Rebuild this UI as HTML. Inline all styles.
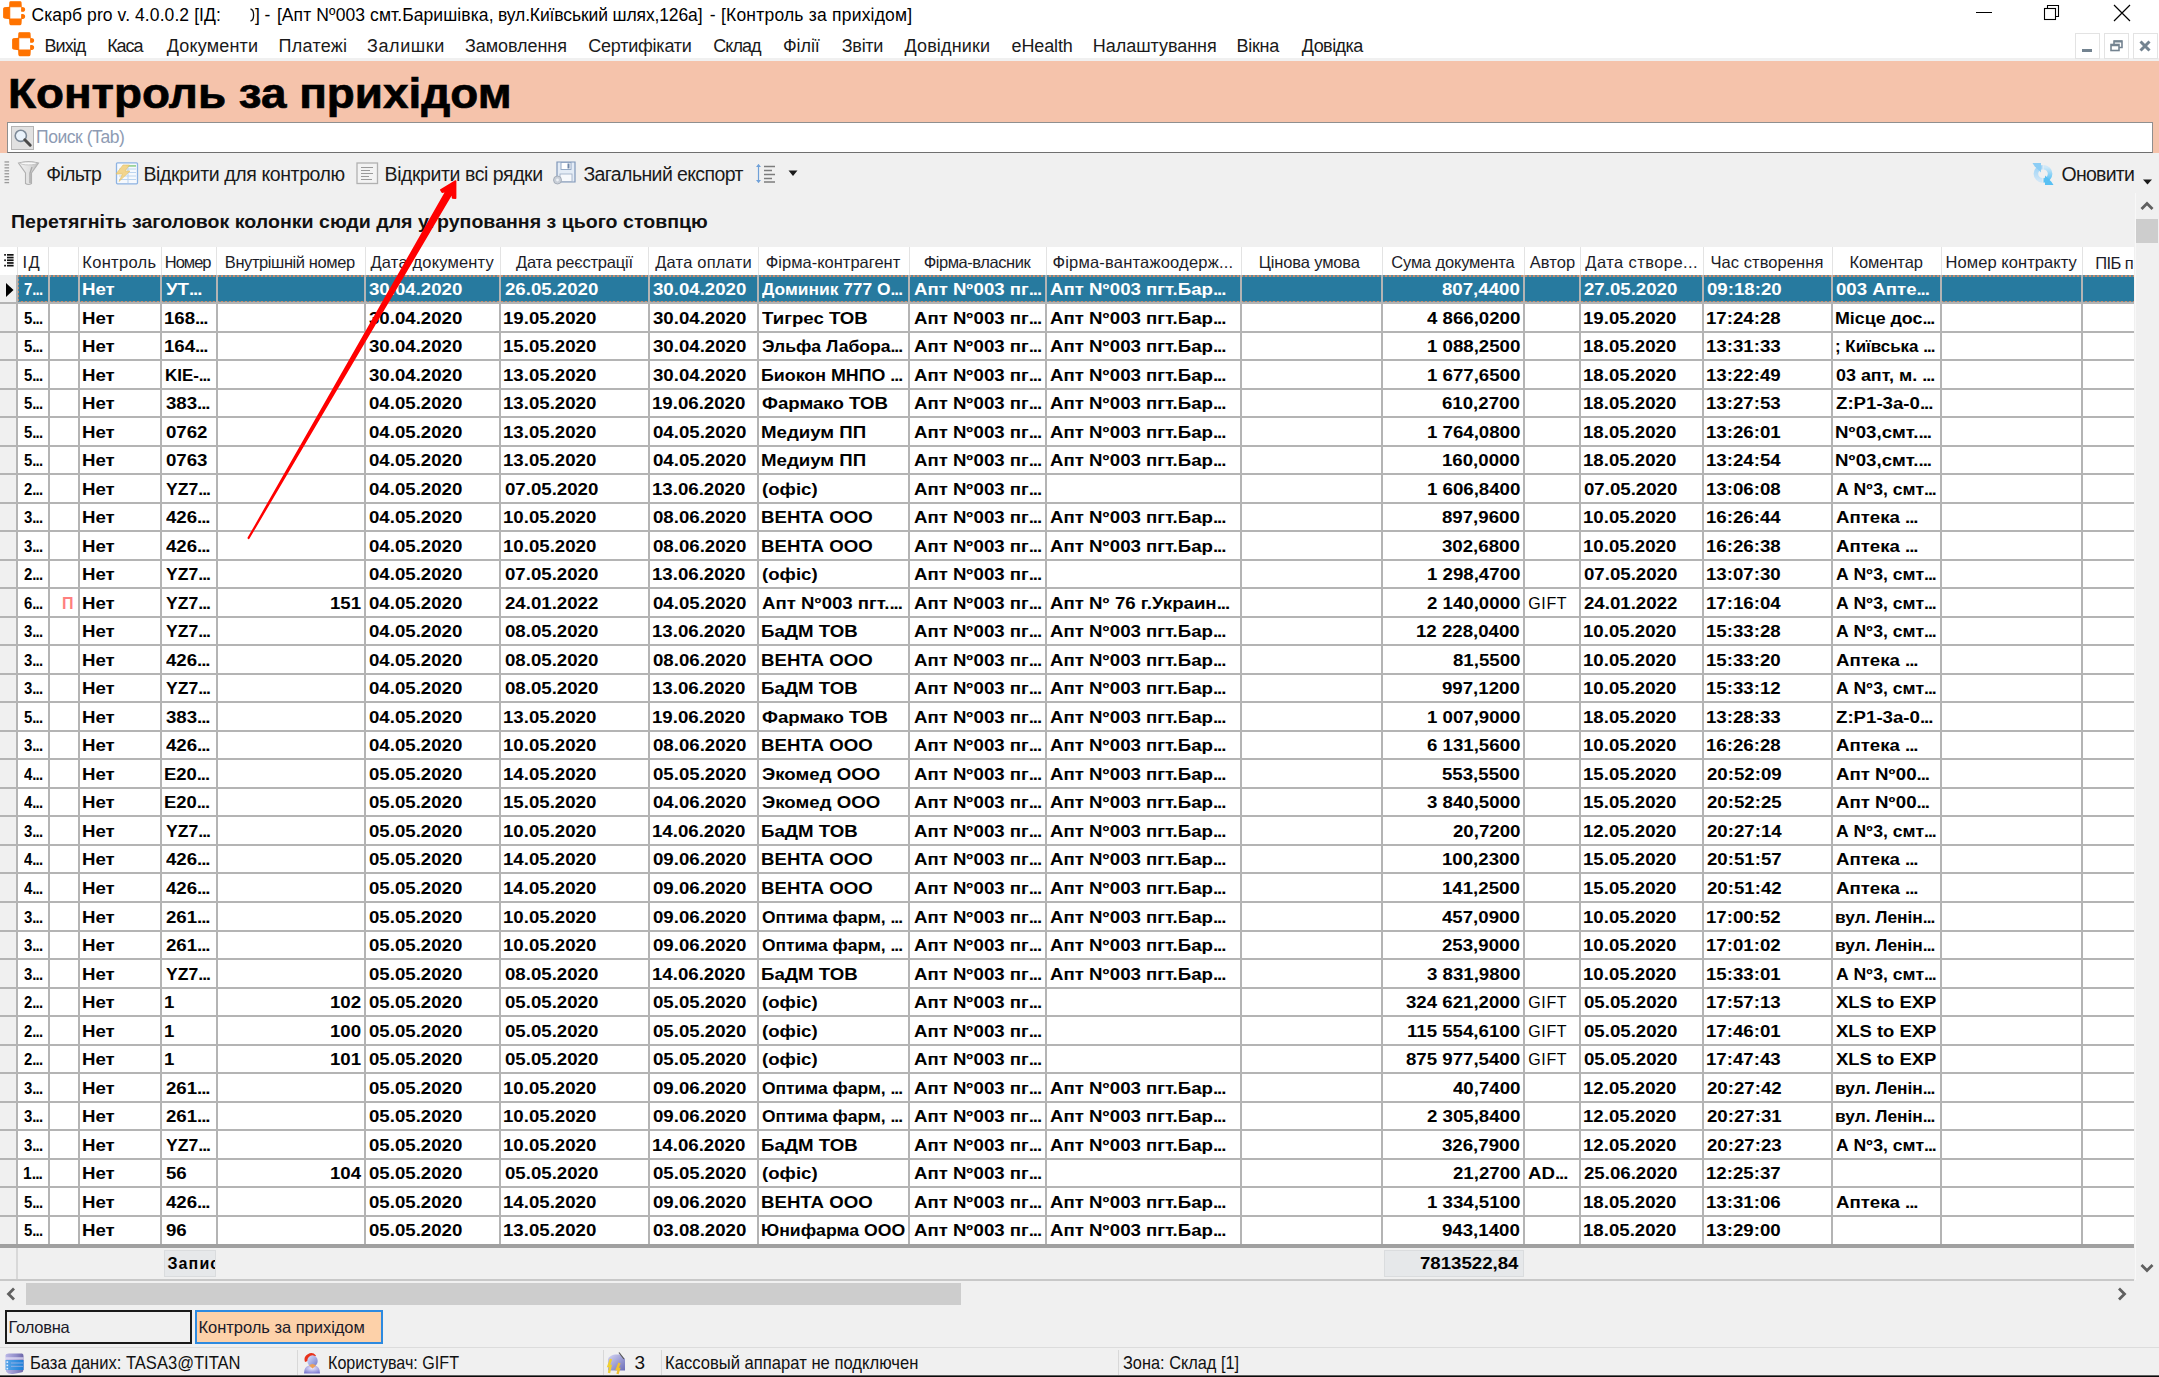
<!DOCTYPE html>
<html><head><meta charset="utf-8"><style>
html,body{margin:0;padding:0;}
body{width:2159px;height:1377px;overflow:hidden;position:relative;background:#f0f0f0;font-family:"Liberation Sans",sans-serif;}
body>div,body>span,body>svg,div>span{position:absolute;}
span{white-space:pre;line-height:1;}
</style></head><body>
<div style="left:0px;top:0px;width:2159px;height:58px;background:#fff;"></div>
<div style="left:0px;top:58px;width:2159px;height:3px;background:#f0f0f0;"></div>
<svg style="left:3px;top:1px" width="23.0" height="25.0" viewBox="0 0 23 25"><g fill="#ff7300" stroke="#ff7300" stroke-width="1.1" stroke-linejoin="round">
<path d="M7.4 0.7 H17.3 Q17.9 0.7 18 1.5 L18.2 5.8 H6.7 L6.9 1.5 Q7 0.7 7.4 0.7Z"/>
<path d="M1.5 6.8 L6.7 6.2 V17.6 L1.5 17 Q0.7 16.9 0.7 16 V7.8 Q0.7 6.9 1.5 6.8Z"/>
<path d="M6.7 18 H18.2 L18 22.5 Q17.9 23.6 17.2 23.6 H7.6 Q7 23.6 6.9 22.5Z"/>
<path d="M18.7 6.6 Q21.5 6.6 21.6 8.4 Q21.7 10.3 19.5 10.3 L18.7 10.3Z"/>
<path d="M18.7 13.6 L19.5 13.6 Q21.7 13.6 21.6 15.6 Q21.5 17.4 18.7 17.4Z"/>
</g></svg>
<svg style="left:12px;top:32px" width="23.0" height="25.0" viewBox="0 0 23 25"><g fill="#ff7300" stroke="#ff7300" stroke-width="1.1" stroke-linejoin="round">
<path d="M7.4 0.7 H17.3 Q17.9 0.7 18 1.5 L18.2 5.8 H6.7 L6.9 1.5 Q7 0.7 7.4 0.7Z"/>
<path d="M1.5 6.8 L6.7 6.2 V17.6 L1.5 17 Q0.7 16.9 0.7 16 V7.8 Q0.7 6.9 1.5 6.8Z"/>
<path d="M6.7 18 H18.2 L18 22.5 Q17.9 23.6 17.2 23.6 H7.6 Q7 23.6 6.9 22.5Z"/>
<path d="M18.7 6.6 Q21.5 6.6 21.6 8.4 Q21.7 10.3 19.5 10.3 L18.7 10.3Z"/>
<path d="M18.7 13.6 L19.5 13.6 Q21.7 13.6 21.6 15.6 Q21.5 17.4 18.7 17.4Z"/>
</g></svg>
<span style="left:31.50px;top:7.19px;font-size:17.5px;font-weight:normal;color:#000;letter-spacing:0.091px;">Скарб pro v. 4.0.0.2 [ІД:</span>
<svg style="left:250px;top:8px" width="5" height="14" viewBox="0 0 5 14"><path d="M0.5 1 Q3.6 1.5 3.6 7 Q3.6 12.5 0.5 13" fill="none" stroke="#111" stroke-width="1.3"/></svg>
<span style="left:255.00px;top:7.19px;font-size:17.5px;font-weight:normal;color:#000;letter-spacing:-0.112px;">] -</span>
<span style="left:276.90px;top:7.19px;font-size:17.5px;font-weight:normal;color:#000;letter-spacing:0.084px;">[Апт N<i style="font-style:normal;letter-spacing:0.4px">º</i>003 смт.Баришівка,</span>
<span style="left:498.00px;top:7.19px;font-size:17.5px;font-weight:normal;color:#000;letter-spacing:-0.121px;">вул.Київський шлях,126а]</span>
<span style="left:709.80px;top:7.19px;font-size:17.5px;font-weight:normal;color:#000;letter-spacing:0.211px;">- [Контроль за прихідом]</span>
<div style="left:1976px;top:12px;width:16px;height:1px;background:#000;"></div>
<svg style="left:2043px;top:4px" width="18" height="18" viewBox="0 0 18 18"><g fill="none" stroke="#000" stroke-width="1.1"><rect x="1.5" y="4.5" width="11" height="11"/><path d="M4.5 4.5 V1.5 H15.5 V12.5 H12.5"/></g></svg>
<svg style="left:2112px;top:3px" width="20" height="20" viewBox="0 0 20 20"><g stroke="#000" stroke-width="1.2"><path d="M2 2 L18 18 M18 2 L2 18"/></g></svg>
<span style="left:44.60px;top:37.06px;font-size:18px;font-weight:normal;color:#1a1a1a;letter-spacing:-0.990px;">Вихід</span>
<span style="left:107.20px;top:37.06px;font-size:18px;font-weight:normal;color:#1a1a1a;letter-spacing:-1.099px;">Каса</span>
<span style="left:166.70px;top:37.06px;font-size:18px;font-weight:normal;color:#1a1a1a;letter-spacing:0.181px;">Документи</span>
<span style="left:278.60px;top:37.06px;font-size:18px;font-weight:normal;color:#1a1a1a;letter-spacing:0.242px;">Платежі</span>
<span style="left:367.00px;top:37.06px;font-size:18px;font-weight:normal;color:#1a1a1a;letter-spacing:0.591px;">Залишки</span>
<span style="left:465.00px;top:37.06px;font-size:18px;font-weight:normal;color:#1a1a1a;letter-spacing:-0.068px;">Замовлення</span>
<span style="left:588.20px;top:37.06px;font-size:18px;font-weight:normal;color:#1a1a1a;letter-spacing:-0.226px;">Сертифікати</span>
<span style="left:713.30px;top:37.06px;font-size:18px;font-weight:normal;color:#1a1a1a;letter-spacing:-0.972px;">Склад</span>
<span style="left:783.00px;top:37.06px;font-size:18px;font-weight:normal;color:#1a1a1a;letter-spacing:-0.096px;">Філії</span>
<span style="left:841.80px;top:37.06px;font-size:18px;font-weight:normal;color:#1a1a1a;letter-spacing:-0.294px;">Звіти</span>
<span style="left:904.40px;top:37.06px;font-size:18px;font-weight:normal;color:#1a1a1a;letter-spacing:0.170px;">Довідники</span>
<span style="left:1011.60px;top:37.06px;font-size:18px;font-weight:normal;color:#1a1a1a;letter-spacing:-0.139px;">eHealth</span>
<span style="left:1092.80px;top:37.06px;font-size:18px;font-weight:normal;color:#1a1a1a;letter-spacing:-0.042px;">Налаштування</span>
<span style="left:1236.40px;top:37.06px;font-size:18px;font-weight:normal;color:#1a1a1a;letter-spacing:-0.255px;">Вікна</span>
<span style="left:1301.80px;top:37.06px;font-size:18px;font-weight:normal;color:#1a1a1a;letter-spacing:-0.540px;">Довідка</span>
<div style="left:2075px;top:33px;width:25px;height:26px;background:#fff;box-sizing:border-box;border:1px solid #e3e3e3;"></div>
<div style="left:2104px;top:33px;width:25px;height:26px;background:#fff;box-sizing:border-box;border:1px solid #e3e3e3;"></div>
<div style="left:2133px;top:33px;width:25px;height:26px;background:#fff;box-sizing:border-box;border:1px solid #e3e3e3;"></div>
<div style="left:2082px;top:49px;width:10px;height:3px;background:#738390;"></div>
<svg style="left:2109px;top:38px" width="16" height="16" viewBox="0 0 16 16"><g fill="none" stroke="#738390" stroke-width="1.6"><rect x="2" y="6.5" width="8" height="6"/><path d="M5 6.5 V3 H13 V9.5 H10"/></g><path d="M2 6 H10 V8.2 H2Z M5 2.5 H13 V4.6 H5Z" fill="#738390"/></svg>
<svg style="left:2138px;top:39px" width="14" height="14" viewBox="0 0 14 14"><g stroke="#738390" stroke-width="3"><path d="M2.5 2.5 L11.5 11.5 M11.5 2.5 L2.5 11.5"/></g></svg>
<div style="left:0px;top:61px;width:2159px;height:92px;background:#f5c3ab;"></div>
<span style="left:7.67px;top:72.30px;font-size:43px;font-weight:bold;color:#000;transform:scaleX(1.0652);transform-origin:0 0;-webkit-text-stroke:0.7px #000;">Контроль за прихідом</span>
<div style="left:7px;top:122px;width:2146px;height:31px;background:#fff;box-sizing:border-box;border:1px solid #8f8f8f;border-bottom-color:#6f6f6f;"></div>
<div style="left:11px;top:126px;width:23px;height:24px;background:#e1e1e1;box-sizing:border-box;border:1px solid #b4b4b4;"></div>
<svg style="left:13px;top:128px" width="20" height="20" viewBox="0 0 20 20"><circle cx="7.8" cy="7.8" r="5.6" fill="#eaf3fb" stroke="#7d8a98" stroke-width="1.6"/><path d="M11.8 11.8 L17.2 17.2" stroke="#4a4a4a" stroke-width="3" stroke-linecap="round"/></svg>
<span style="left:36.00px;top:128.89px;font-size:17.5px;font-weight:normal;color:#8e9bb3;letter-spacing:-0.440px;">Поиск (Tab)</span>
<svg style="left:4px;top:161px" width="6" height="24" viewBox="0 0 6 24"><g fill="#9a9a9a"><rect x="0.5" y="0.30" width="4.6" height="1.3"/><rect x="0.5" y="3.25" width="4.6" height="1.3"/><rect x="0.5" y="6.20" width="4.6" height="1.3"/><rect x="0.5" y="9.15" width="4.6" height="1.3"/><rect x="0.5" y="12.10" width="4.6" height="1.3"/><rect x="0.5" y="15.05" width="4.6" height="1.3"/><rect x="0.5" y="18.00" width="4.6" height="1.3"/><rect x="0.5" y="20.95" width="4.6" height="1.3"/></g></svg>
<svg style="left:17px;top:160px" width="23" height="26" viewBox="0 0 23 26"><defs><linearGradient id="fg" x1="0" x2="1"><stop offset="0" stop-color="#f2f2f2"/><stop offset="0.55" stop-color="#e0e0e0"/><stop offset="1" stop-color="#b9b9b9"/></linearGradient></defs><path d="M1.5 3 Q11.5 0 21.5 3 L14.5 13 V23.5 Q11.5 25.5 8.5 23.5 V13 Z" fill="url(#fg)" stroke="#b0b0b0" stroke-width="1.1"/><ellipse cx="11.5" cy="3.4" rx="8" ry="1.5" fill="#f8f8f8" stroke="#bcbcbc" stroke-width="0.8"/><path d="M15 7 L13 13 V23" stroke="#a9a9a9" stroke-width="1.4" fill="none"/></svg>
<span style="left:46.20px;top:164.69px;font-size:19.5px;font-weight:normal;color:#1a1a1a;letter-spacing:-0.661px;">Фільтр</span>
<svg style="left:114px;top:162px" width="25" height="23" viewBox="0 0 25 23"><rect x="2.5" y="0.8" width="21" height="21" rx="1" fill="#f6f9fd" stroke="#8db3e2" stroke-width="1.3"/><g stroke="#bcd5f0" stroke-width="1.1"><path d="M5 7 H22 M5 10.5 H22 M5 14 H22 M5 17.5 H22 M14 4 V21"/></g><rect x="12" y="3" width="10" height="1.8" fill="#9ad39a"/><path d="M9 3 L2 12 H8.5 L5 19.5 L16 9 H11 L15.5 3 Z" fill="#f3d488" stroke="#e2bd5e" stroke-width="0.6" opacity="0.95"/></svg>
<span style="left:143.50px;top:164.69px;font-size:19.5px;font-weight:normal;color:#1a1a1a;letter-spacing:-0.390px;">Відкрити для контролю</span>
<svg style="left:356px;top:162px" width="23" height="23" viewBox="0 0 23 23"><rect x="1" y="1" width="20.5" height="20.5" fill="#f3f3f3" stroke="#b1b1b1" stroke-width="1.3"/><g stroke="#9a9a9a" stroke-width="1.2"><path d="M5 5.5 H17 M5 8.5 H14 M5 11.5 H17 M5 14.5 H13 M5 17.5 H16"/></g></svg>
<span style="left:384.60px;top:164.69px;font-size:19.5px;font-weight:normal;color:#1a1a1a;letter-spacing:-0.433px;">Відкрити всі рядки</span>
<svg style="left:552px;top:161px" width="25" height="24" viewBox="0 0 25 24"><path d="M5 1 H23 V21 H7 L5 19 Z" fill="#e4ecf6" stroke="#7f96b8" stroke-width="1.2"/><rect x="9" y="1.5" width="10" height="7" fill="#fff" stroke="#8aa0bf" stroke-width="0.9"/><rect x="15.5" y="2.5" width="2" height="5" fill="#6f86a8"/><rect x="8" y="13" width="12" height="7.5" fill="#f7f9fc" stroke="#9aaac2" stroke-width="0.8"/><circle cx="5.5" cy="19" r="4" fill="#c9cfd8" stroke="#9aa3b0" stroke-width="0.8"/><circle cx="5.5" cy="19" r="1.4" fill="#eef1f5"/></svg>
<span style="left:583.40px;top:164.69px;font-size:19.5px;font-weight:normal;color:#1a1a1a;letter-spacing:-0.608px;">Загальний експорт</span>
<svg style="left:755px;top:163px" width="22" height="21" viewBox="0 0 22 21"><path d="M3.5 1.5 V19.5" stroke="#6fa0d8" stroke-width="1.2"/><path d="M1 4 L3.5 1 L6 4 Z M1 17 L3.5 20 L6 17 Z" fill="#6fa0d8"/><g stroke="#7c7c7c" stroke-width="1.3"><path d="M9 3.5 H20 M9 7.5 H17 M9 11.5 H20 M9 15.5 H17 M9 19 H20"/></g></svg>
<svg style="left:788px;top:170px" width="10" height="7" viewBox="0 0 10 7"><path d="M0.5 0.5 H9.5 L5 6 Z" fill="#1a1a1a"/></svg>
<svg style="left:2031px;top:162px" width="24" height="24" viewBox="0 0 24 24"><defs><linearGradient id="rg1" x1="0" y1="0" x2="0" y2="1"><stop offset="0" stop-color="#9fd4f7"/><stop offset="1" stop-color="#cfe6f7"/></linearGradient><linearGradient id="rg2" x1="0" y1="0" x2="0" y2="1"><stop offset="0" stop-color="#cfe8f8"/><stop offset="1" stop-color="#55c0f4"/></linearGradient></defs><path d="M11.5 5.2 A6.6 6.6 0 0 0 11.5 18.4" fill="none" stroke="url(#rg1)" stroke-width="4.6"/><path d="M1.5 1 H10 V10.5 L7.2 7.8 L3.6 4.2 Z" fill="#8ccdf5"/><path d="M12.5 5.2 A6.6 6.6 0 0 1 12.5 18.4" fill="none" stroke="url(#rg2)" stroke-width="4.6"/><path d="M22.5 23 H14 V13.5 L16.8 16.2 L20.4 19.8 Z" fill="#58c0f3"/></svg>
<span style="left:2061.50px;top:164.69px;font-size:19.5px;font-weight:normal;color:#1a1a1a;letter-spacing:-0.744px;">Оновити</span>
<svg style="left:2142px;top:178px" width="11" height="8" viewBox="0 0 11 8"><path d="M1 1.5 H10 L5.5 6.5 Z" fill="#1a1a1a"/></svg>
<span style="left:11.41px;top:212.66px;font-size:18px;font-weight:bold;color:#111;transform:scaleX(1.0873);transform-origin:0 0;">Перетягніть заголовок колонки сюди для угруповання з цього стовпцю</span>
<div style="left:0px;top:247px;width:2134px;height:28px;background:#fff;"></div>
<div style="left:17px;top:247px;width:1px;height:28px;background:#e3e3e3;"></div>
<div style="left:48px;top:247px;width:1px;height:28px;background:#e3e3e3;"></div>
<div style="left:78px;top:247px;width:1px;height:28px;background:#e3e3e3;"></div>
<div style="left:161px;top:247px;width:1px;height:28px;background:#e3e3e3;"></div>
<div style="left:216px;top:247px;width:1px;height:28px;background:#e3e3e3;"></div>
<div style="left:365px;top:247px;width:1px;height:28px;background:#e3e3e3;"></div>
<div style="left:500px;top:247px;width:1px;height:28px;background:#e3e3e3;"></div>
<div style="left:648px;top:247px;width:1px;height:28px;background:#e3e3e3;"></div>
<div style="left:758px;top:247px;width:1px;height:28px;background:#e3e3e3;"></div>
<div style="left:909px;top:247px;width:1px;height:28px;background:#e3e3e3;"></div>
<div style="left:1046px;top:247px;width:1px;height:28px;background:#e3e3e3;"></div>
<div style="left:1241px;top:247px;width:1px;height:28px;background:#e3e3e3;"></div>
<div style="left:1382px;top:247px;width:1px;height:28px;background:#e3e3e3;"></div>
<div style="left:1524px;top:247px;width:1px;height:28px;background:#e3e3e3;"></div>
<div style="left:1580px;top:247px;width:1px;height:28px;background:#e3e3e3;"></div>
<div style="left:1703px;top:247px;width:1px;height:28px;background:#e3e3e3;"></div>
<div style="left:1832px;top:247px;width:1px;height:28px;background:#e3e3e3;"></div>
<div style="left:1941px;top:247px;width:1px;height:28px;background:#e3e3e3;"></div>
<div style="left:2082px;top:247px;width:1px;height:28px;background:#e3e3e3;"></div>
<svg style="left:4px;top:253px" width="10" height="15" viewBox="0 0 10 15"><g fill="#111"><rect x="3" y="1.0" width="6.6" height="1.7"/><rect x="3" y="3.7" width="6.6" height="1.7"/><rect x="3" y="6.4" width="6.6" height="1.7"/><rect x="3" y="9.1" width="6.6" height="1.7"/><rect x="3" y="11.8" width="6.6" height="1.7"/><rect x="0.2" y="1" width="1.7" height="1.7"/><rect x="0.2" y="6.4" width="1.7" height="1.7"/><rect x="0.2" y="11.8" width="1.7" height="1.7"/></g></svg>
<span style="left:22.50px;top:253.93px;font-size:16.5px;font-weight:normal;color:#1c1c28;letter-spacing:1.416px;">ІД</span>
<span style="left:82.30px;top:253.93px;font-size:16.5px;font-weight:normal;color:#1c1c28;letter-spacing:0.304px;">Контроль</span>
<span style="left:164.80px;top:253.93px;font-size:16.5px;font-weight:normal;color:#1c1c28;letter-spacing:-1.028px;">Номер</span>
<span style="left:224.80px;top:253.93px;font-size:16.5px;font-weight:normal;color:#1c1c28;letter-spacing:-0.413px;">Внутрішній номер</span>
<span style="left:370.50px;top:253.93px;font-size:16.5px;font-weight:normal;color:#1c1c28;letter-spacing:0.172px;">Дата документу</span>
<span style="left:515.90px;top:253.93px;font-size:16.5px;font-weight:normal;color:#1c1c28;letter-spacing:-0.176px;">Дата реєстрації</span>
<span style="left:655.20px;top:253.93px;font-size:16.5px;font-weight:normal;color:#1c1c28;letter-spacing:0.197px;">Дата оплати</span>
<span style="left:765.80px;top:253.93px;font-size:16.5px;font-weight:normal;color:#1c1c28;letter-spacing:-0.003px;">Фірма-контрагент</span>
<span style="left:923.70px;top:253.93px;font-size:16.5px;font-weight:normal;color:#1c1c28;letter-spacing:-0.456px;">Фірма-власник</span>
<span style="left:1052.40px;top:253.93px;font-size:16.5px;font-weight:normal;color:#1c1c28;letter-spacing:0.203px;">Фірма-вантажоодерж...</span>
<span style="left:1258.80px;top:253.93px;font-size:16.5px;font-weight:normal;color:#1c1c28;letter-spacing:-0.152px;">Цінова умова</span>
<span style="left:1391.30px;top:253.93px;font-size:16.5px;font-weight:normal;color:#1c1c28;letter-spacing:-0.174px;">Сума документа</span>
<span style="left:1529.70px;top:253.93px;font-size:16.5px;font-weight:normal;color:#1c1c28;letter-spacing:0.086px;">Автор</span>
<span style="left:1585.30px;top:253.93px;font-size:16.5px;font-weight:normal;color:#1c1c28;letter-spacing:0.430px;">Дата створе...</span>
<span style="left:1710.40px;top:253.93px;font-size:16.5px;font-weight:normal;color:#1c1c28;letter-spacing:0.071px;">Час створення</span>
<span style="left:1849.50px;top:253.93px;font-size:16.5px;font-weight:normal;color:#1c1c28;letter-spacing:-0.110px;">Коментар</span>
<span style="left:1945.50px;top:253.93px;font-size:16.5px;font-weight:normal;color:#1c1c28;letter-spacing:0.070px;">Номер контракту</span>
<div style="left:2083px;top:247px;width:51px;height:28px;overflow:hidden">
<span style="left:12.2px;top:7.63px;font-size:16.5px;color:#1c1c28;letter-spacing:-0.6px">ПІБ п</span>
</div>
<div style="left:0px;top:275px;width:2134px;height:969px;background:#fff;"></div>
<div style="left:0px;top:275px;width:16px;height:969px;background:#f0f0f0;"></div>
<div style="left:17px;top:275px;width:2117px;height:28px;background:#277a9f;"></div>
<div style="left:17px;top:275px;width:2117px;height:2px;background:repeating-linear-gradient(90deg,#c98d6c 0 2px,#5a8aa0 2px 4px);"></div>
<div style="left:17px;top:301px;width:2117px;height:2px;background:repeating-linear-gradient(90deg,#c98d6c 0 2px,#5a8aa0 2px 4px);"></div>
<div style="left:17px;top:275px;width:2px;height:28px;background:repeating-linear-gradient(180deg,#c98d6c 0 2px,#5a8aa0 2px 4px);"></div>
<svg style="left:6px;top:283px" width="8" height="14" viewBox="0 0 8 14"><path d="M0 0 L7.5 7 L0 14Z" fill="#000"/></svg>
<div style="left:0px;top:302px;width:2134px;height:2px;background:#b4b4b4;"></div>
<div style="left:0px;top:331px;width:2134px;height:2px;background:#b4b4b4;"></div>
<div style="left:0px;top:359px;width:2134px;height:2px;background:#b4b4b4;"></div>
<div style="left:0px;top:388px;width:2134px;height:2px;background:#b4b4b4;"></div>
<div style="left:0px;top:416px;width:2134px;height:2px;background:#b4b4b4;"></div>
<div style="left:0px;top:445px;width:2134px;height:2px;background:#b4b4b4;"></div>
<div style="left:0px;top:473px;width:2134px;height:2px;background:#b4b4b4;"></div>
<div style="left:0px;top:502px;width:2134px;height:2px;background:#b4b4b4;"></div>
<div style="left:0px;top:530px;width:2134px;height:2px;background:#b4b4b4;"></div>
<div style="left:0px;top:559px;width:2134px;height:2px;background:#b4b4b4;"></div>
<div style="left:0px;top:587px;width:2134px;height:2px;background:#b4b4b4;"></div>
<div style="left:0px;top:616px;width:2134px;height:2px;background:#b4b4b4;"></div>
<div style="left:0px;top:644px;width:2134px;height:2px;background:#b4b4b4;"></div>
<div style="left:0px;top:673px;width:2134px;height:2px;background:#b4b4b4;"></div>
<div style="left:0px;top:701px;width:2134px;height:2px;background:#b4b4b4;"></div>
<div style="left:0px;top:730px;width:2134px;height:2px;background:#b4b4b4;"></div>
<div style="left:0px;top:758px;width:2134px;height:2px;background:#b4b4b4;"></div>
<div style="left:0px;top:787px;width:2134px;height:2px;background:#b4b4b4;"></div>
<div style="left:0px;top:815px;width:2134px;height:2px;background:#b4b4b4;"></div>
<div style="left:0px;top:844px;width:2134px;height:2px;background:#b4b4b4;"></div>
<div style="left:0px;top:872px;width:2134px;height:2px;background:#b4b4b4;"></div>
<div style="left:0px;top:901px;width:2134px;height:2px;background:#b4b4b4;"></div>
<div style="left:0px;top:930px;width:2134px;height:2px;background:#b4b4b4;"></div>
<div style="left:0px;top:958px;width:2134px;height:2px;background:#b4b4b4;"></div>
<div style="left:0px;top:987px;width:2134px;height:2px;background:#b4b4b4;"></div>
<div style="left:0px;top:1015px;width:2134px;height:2px;background:#b4b4b4;"></div>
<div style="left:0px;top:1044px;width:2134px;height:2px;background:#b4b4b4;"></div>
<div style="left:0px;top:1072px;width:2134px;height:2px;background:#b4b4b4;"></div>
<div style="left:0px;top:1101px;width:2134px;height:2px;background:#b4b4b4;"></div>
<div style="left:0px;top:1129px;width:2134px;height:2px;background:#b4b4b4;"></div>
<div style="left:0px;top:1158px;width:2134px;height:2px;background:#b4b4b4;"></div>
<div style="left:0px;top:1186px;width:2134px;height:2px;background:#b4b4b4;"></div>
<div style="left:0px;top:1215px;width:2134px;height:2px;background:#b4b4b4;"></div>
<div style="left:16px;top:275px;width:2px;height:969px;background:#b4b4b4;"></div>
<div style="left:48px;top:275px;width:2px;height:969px;background:#b4b4b4;"></div>
<div style="left:78px;top:275px;width:2px;height:969px;background:#b4b4b4;"></div>
<div style="left:160px;top:275px;width:2px;height:969px;background:#b4b4b4;"></div>
<div style="left:216px;top:275px;width:2px;height:969px;background:#b4b4b4;"></div>
<div style="left:364px;top:275px;width:2px;height:969px;background:#b4b4b4;"></div>
<div style="left:499px;top:275px;width:2px;height:969px;background:#b4b4b4;"></div>
<div style="left:648px;top:275px;width:2px;height:969px;background:#b4b4b4;"></div>
<div style="left:757px;top:275px;width:2px;height:969px;background:#b4b4b4;"></div>
<div style="left:908px;top:275px;width:2px;height:969px;background:#b4b4b4;"></div>
<div style="left:1045px;top:275px;width:2px;height:969px;background:#b4b4b4;"></div>
<div style="left:1240px;top:275px;width:2px;height:969px;background:#b4b4b4;"></div>
<div style="left:1381px;top:275px;width:2px;height:969px;background:#b4b4b4;"></div>
<div style="left:1523px;top:275px;width:2px;height:969px;background:#b4b4b4;"></div>
<div style="left:1579px;top:275px;width:2px;height:969px;background:#b4b4b4;"></div>
<div style="left:1702px;top:275px;width:2px;height:969px;background:#b4b4b4;"></div>
<div style="left:1831px;top:275px;width:2px;height:969px;background:#b4b4b4;"></div>
<div style="left:1940px;top:275px;width:2px;height:969px;background:#b4b4b4;"></div>
<div style="left:2081px;top:275px;width:2px;height:969px;background:#b4b4b4;"></div>
<div style="left:0px;top:1244px;width:2134px;height:4px;background:#a0a0a0;"></div>
<span style="left:23.70px;top:281.86px;font-size:16px;font-weight:bold;color:#fff;transform:scaleX(0.9317);transform-origin:0 0;">7<i style="font-style:normal;letter-spacing:-0.9px">..</i>.</span>
<span style="left:81.63px;top:281.86px;font-size:16px;font-weight:bold;color:#fff;transform:scaleX(1.1650);transform-origin:0 0;">Нет</span>
<span style="left:165.60px;top:281.86px;font-size:16px;font-weight:bold;color:#fff;transform:scaleX(1.1650);transform-origin:0 0;">УТ<i style="font-style:normal;letter-spacing:-0.9px">..</i>.</span>
<span style="left:369.30px;top:281.86px;font-size:16px;font-weight:bold;color:#fff;transform:scaleX(1.1650);transform-origin:0 0;">30.04.2020</span>
<span style="left:504.60px;top:281.86px;font-size:16px;font-weight:bold;color:#fff;transform:scaleX(1.1650);transform-origin:0 0;">26.05.2020</span>
<span style="left:652.80px;top:281.86px;font-size:16px;font-weight:bold;color:#fff;transform:scaleX(1.1650);transform-origin:0 0;">30.04.2020</span>
<span style="left:762.30px;top:281.86px;font-size:16px;font-weight:bold;color:#fff;transform:scaleX(1.0856);transform-origin:0 0;">Доминик 777 О<i style="font-style:normal;letter-spacing:-0.9px">..</i>.</span>
<span style="left:913.60px;top:281.86px;font-size:16px;font-weight:bold;color:#fff;transform:scaleX(1.1617);transform-origin:0 0;">Апт N<i style="font-style:normal;letter-spacing:0.4px">º</i>003 пг<i style="font-style:normal;letter-spacing:-0.9px">..</i>.</span>
<span style="left:1050.30px;top:281.86px;font-size:16px;font-weight:bold;color:#fff;transform:scaleX(1.1650);transform-origin:0 0;">Апт N<i style="font-style:normal;letter-spacing:0.4px">º</i>003 пгт.Бар<i style="font-style:normal;letter-spacing:-0.9px">..</i>.</span>
<span style="left:1442.14px;top:281.86px;font-size:16px;font-weight:bold;color:#fff;transform:scaleX(1.1650);transform-origin:0 0;">807,4400</span>
<span style="left:1584.30px;top:281.86px;font-size:16px;font-weight:bold;color:#fff;transform:scaleX(1.1650);transform-origin:0 0;">27.05.2020</span>
<span style="left:1707.30px;top:281.86px;font-size:16px;font-weight:bold;color:#fff;transform:scaleX(1.1650);transform-origin:0 0;">09:18:20</span>
<span style="left:1836.30px;top:281.86px;font-size:16px;font-weight:bold;color:#fff;transform:scaleX(1.1650);transform-origin:0 0;">003 Апте<i style="font-style:normal;letter-spacing:-0.9px">..</i>.</span>
<span style="left:23.70px;top:310.86px;font-size:16px;font-weight:bold;color:#000;transform:scaleX(0.9317);transform-origin:0 0;">5<i style="font-style:normal;letter-spacing:-0.9px">..</i>.</span>
<span style="left:81.63px;top:310.86px;font-size:16px;font-weight:bold;color:#000;transform:scaleX(1.1650);transform-origin:0 0;">Нет</span>
<span style="left:164.44px;top:310.86px;font-size:16px;font-weight:bold;color:#000;transform:scaleX(1.1650);transform-origin:0 0;">168<i style="font-style:normal;letter-spacing:-0.9px">..</i>.</span>
<span style="left:369.30px;top:310.86px;font-size:16px;font-weight:bold;color:#000;transform:scaleX(1.1650);transform-origin:0 0;">30.04.2020</span>
<span style="left:503.44px;top:310.86px;font-size:16px;font-weight:bold;color:#000;transform:scaleX(1.1650);transform-origin:0 0;">19.05.2020</span>
<span style="left:652.80px;top:310.86px;font-size:16px;font-weight:bold;color:#000;transform:scaleX(1.1650);transform-origin:0 0;">30.04.2020</span>
<span style="left:762.30px;top:310.86px;font-size:16px;font-weight:bold;color:#000;transform:scaleX(1.1650);transform-origin:0 0;">Тигрес ТОВ</span>
<span style="left:913.60px;top:310.86px;font-size:16px;font-weight:bold;color:#000;transform:scaleX(1.1617);transform-origin:0 0;">Апт N<i style="font-style:normal;letter-spacing:0.4px">º</i>003 пг<i style="font-style:normal;letter-spacing:-0.9px">..</i>.</span>
<span style="left:1050.30px;top:310.86px;font-size:16px;font-weight:bold;color:#000;transform:scaleX(1.1650);transform-origin:0 0;">Апт N<i style="font-style:normal;letter-spacing:0.4px">º</i>003 пгт.Бар<i style="font-style:normal;letter-spacing:-0.9px">..</i>.</span>
<span style="left:1426.59px;top:310.86px;font-size:16px;font-weight:bold;color:#000;transform:scaleX(1.1650);transform-origin:0 0;">4 866,0200</span>
<span style="left:1583.13px;top:310.86px;font-size:16px;font-weight:bold;color:#000;transform:scaleX(1.1650);transform-origin:0 0;">19.05.2020</span>
<span style="left:1706.13px;top:310.86px;font-size:16px;font-weight:bold;color:#000;transform:scaleX(1.1650);transform-origin:0 0;">17:24:28</span>
<span style="left:1835.19px;top:310.86px;font-size:16px;font-weight:bold;color:#000;transform:scaleX(1.1144);transform-origin:0 0;">Місце дос<i style="font-style:normal;letter-spacing:-0.9px">..</i>.</span>
<span style="left:23.70px;top:339.36px;font-size:16px;font-weight:bold;color:#000;transform:scaleX(0.9317);transform-origin:0 0;">5<i style="font-style:normal;letter-spacing:-0.9px">..</i>.</span>
<span style="left:81.63px;top:339.36px;font-size:16px;font-weight:bold;color:#000;transform:scaleX(1.1650);transform-origin:0 0;">Нет</span>
<span style="left:164.44px;top:339.36px;font-size:16px;font-weight:bold;color:#000;transform:scaleX(1.1650);transform-origin:0 0;">164<i style="font-style:normal;letter-spacing:-0.9px">..</i>.</span>
<span style="left:369.30px;top:339.36px;font-size:16px;font-weight:bold;color:#000;transform:scaleX(1.1650);transform-origin:0 0;">30.04.2020</span>
<span style="left:503.44px;top:339.36px;font-size:16px;font-weight:bold;color:#000;transform:scaleX(1.1650);transform-origin:0 0;">15.05.2020</span>
<span style="left:652.80px;top:339.36px;font-size:16px;font-weight:bold;color:#000;transform:scaleX(1.1650);transform-origin:0 0;">30.04.2020</span>
<span style="left:762.30px;top:339.36px;font-size:16px;font-weight:bold;color:#000;transform:scaleX(1.0956);transform-origin:0 0;">Эльфа Лабора<i style="font-style:normal;letter-spacing:-0.9px">..</i>.</span>
<span style="left:913.60px;top:339.36px;font-size:16px;font-weight:bold;color:#000;transform:scaleX(1.1617);transform-origin:0 0;">Апт N<i style="font-style:normal;letter-spacing:0.4px">º</i>003 пг<i style="font-style:normal;letter-spacing:-0.9px">..</i>.</span>
<span style="left:1050.30px;top:339.36px;font-size:16px;font-weight:bold;color:#000;transform:scaleX(1.1650);transform-origin:0 0;">Апт N<i style="font-style:normal;letter-spacing:0.4px">º</i>003 пгт.Бар<i style="font-style:normal;letter-spacing:-0.9px">..</i>.</span>
<span style="left:1426.59px;top:339.36px;font-size:16px;font-weight:bold;color:#000;transform:scaleX(1.1650);transform-origin:0 0;">1 088,2500</span>
<span style="left:1583.13px;top:339.36px;font-size:16px;font-weight:bold;color:#000;transform:scaleX(1.1650);transform-origin:0 0;">18.05.2020</span>
<span style="left:1706.13px;top:339.36px;font-size:16px;font-weight:bold;color:#000;transform:scaleX(1.1650);transform-origin:0 0;">13:31:33</span>
<span style="left:1835.24px;top:339.36px;font-size:16px;font-weight:bold;color:#000;transform:scaleX(1.0568);transform-origin:0 0;">; Київська <i style="font-style:normal;letter-spacing:-0.9px">..</i>.</span>
<span style="left:23.70px;top:367.86px;font-size:16px;font-weight:bold;color:#000;transform:scaleX(0.9317);transform-origin:0 0;">5<i style="font-style:normal;letter-spacing:-0.9px">..</i>.</span>
<span style="left:81.63px;top:367.86px;font-size:16px;font-weight:bold;color:#000;transform:scaleX(1.1650);transform-origin:0 0;">Нет</span>
<span style="left:164.54px;top:367.86px;font-size:16px;font-weight:bold;color:#000;transform:scaleX(1.0572);transform-origin:0 0;">KIE-<i style="font-style:normal;letter-spacing:-0.9px">..</i>.</span>
<span style="left:369.30px;top:367.86px;font-size:16px;font-weight:bold;color:#000;transform:scaleX(1.1650);transform-origin:0 0;">30.04.2020</span>
<span style="left:503.44px;top:367.86px;font-size:16px;font-weight:bold;color:#000;transform:scaleX(1.1650);transform-origin:0 0;">13.05.2020</span>
<span style="left:652.80px;top:367.86px;font-size:16px;font-weight:bold;color:#000;transform:scaleX(1.1650);transform-origin:0 0;">30.04.2020</span>
<span style="left:761.19px;top:367.86px;font-size:16px;font-weight:bold;color:#000;transform:scaleX(1.1137);transform-origin:0 0;">Биокон МНПО <i style="font-style:normal;letter-spacing:-0.9px">..</i>.</span>
<span style="left:913.60px;top:367.86px;font-size:16px;font-weight:bold;color:#000;transform:scaleX(1.1617);transform-origin:0 0;">Апт N<i style="font-style:normal;letter-spacing:0.4px">º</i>003 пг<i style="font-style:normal;letter-spacing:-0.9px">..</i>.</span>
<span style="left:1050.30px;top:367.86px;font-size:16px;font-weight:bold;color:#000;transform:scaleX(1.1650);transform-origin:0 0;">Апт N<i style="font-style:normal;letter-spacing:0.4px">º</i>003 пгт.Бар<i style="font-style:normal;letter-spacing:-0.9px">..</i>.</span>
<span style="left:1426.59px;top:367.86px;font-size:16px;font-weight:bold;color:#000;transform:scaleX(1.1650);transform-origin:0 0;">1 677,6500</span>
<span style="left:1583.13px;top:367.86px;font-size:16px;font-weight:bold;color:#000;transform:scaleX(1.1650);transform-origin:0 0;">18.05.2020</span>
<span style="left:1706.13px;top:367.86px;font-size:16px;font-weight:bold;color:#000;transform:scaleX(1.1650);transform-origin:0 0;">13:22:49</span>
<span style="left:1836.30px;top:367.86px;font-size:16px;font-weight:bold;color:#000;transform:scaleX(1.1196);transform-origin:0 0;">03 апт, м. <i style="font-style:normal;letter-spacing:-0.9px">..</i>.</span>
<span style="left:23.70px;top:396.36px;font-size:16px;font-weight:bold;color:#000;transform:scaleX(0.9317);transform-origin:0 0;">5<i style="font-style:normal;letter-spacing:-0.9px">..</i>.</span>
<span style="left:81.63px;top:396.36px;font-size:16px;font-weight:bold;color:#000;transform:scaleX(1.1650);transform-origin:0 0;">Нет</span>
<span style="left:165.60px;top:396.36px;font-size:16px;font-weight:bold;color:#000;transform:scaleX(1.1650);transform-origin:0 0;">383<i style="font-style:normal;letter-spacing:-0.9px">..</i>.</span>
<span style="left:369.30px;top:396.36px;font-size:16px;font-weight:bold;color:#000;transform:scaleX(1.1650);transform-origin:0 0;">04.05.2020</span>
<span style="left:503.44px;top:396.36px;font-size:16px;font-weight:bold;color:#000;transform:scaleX(1.1650);transform-origin:0 0;">13.05.2020</span>
<span style="left:651.63px;top:396.36px;font-size:16px;font-weight:bold;color:#000;transform:scaleX(1.1650);transform-origin:0 0;">19.06.2020</span>
<span style="left:762.30px;top:396.36px;font-size:16px;font-weight:bold;color:#000;transform:scaleX(1.1650);transform-origin:0 0;">Фармако ТОВ</span>
<span style="left:913.60px;top:396.36px;font-size:16px;font-weight:bold;color:#000;transform:scaleX(1.1617);transform-origin:0 0;">Апт N<i style="font-style:normal;letter-spacing:0.4px">º</i>003 пг<i style="font-style:normal;letter-spacing:-0.9px">..</i>.</span>
<span style="left:1050.30px;top:396.36px;font-size:16px;font-weight:bold;color:#000;transform:scaleX(1.1650);transform-origin:0 0;">Апт N<i style="font-style:normal;letter-spacing:0.4px">º</i>003 пгт.Бар<i style="font-style:normal;letter-spacing:-0.9px">..</i>.</span>
<span style="left:1442.14px;top:396.36px;font-size:16px;font-weight:bold;color:#000;transform:scaleX(1.1650);transform-origin:0 0;">610,2700</span>
<span style="left:1583.13px;top:396.36px;font-size:16px;font-weight:bold;color:#000;transform:scaleX(1.1650);transform-origin:0 0;">18.05.2020</span>
<span style="left:1706.13px;top:396.36px;font-size:16px;font-weight:bold;color:#000;transform:scaleX(1.1650);transform-origin:0 0;">13:27:53</span>
<span style="left:1836.30px;top:396.36px;font-size:16px;font-weight:bold;color:#000;transform:scaleX(1.1650);transform-origin:0 0;">Z:P1-3a-0<i style="font-style:normal;letter-spacing:-0.9px">..</i>.</span>
<span style="left:23.70px;top:424.86px;font-size:16px;font-weight:bold;color:#000;transform:scaleX(0.9317);transform-origin:0 0;">5<i style="font-style:normal;letter-spacing:-0.9px">..</i>.</span>
<span style="left:81.63px;top:424.86px;font-size:16px;font-weight:bold;color:#000;transform:scaleX(1.1650);transform-origin:0 0;">Нет</span>
<span style="left:165.60px;top:424.86px;font-size:16px;font-weight:bold;color:#000;transform:scaleX(1.1650);transform-origin:0 0;">0762</span>
<span style="left:369.30px;top:424.86px;font-size:16px;font-weight:bold;color:#000;transform:scaleX(1.1650);transform-origin:0 0;">04.05.2020</span>
<span style="left:503.44px;top:424.86px;font-size:16px;font-weight:bold;color:#000;transform:scaleX(1.1650);transform-origin:0 0;">13.05.2020</span>
<span style="left:652.80px;top:424.86px;font-size:16px;font-weight:bold;color:#000;transform:scaleX(1.1650);transform-origin:0 0;">04.05.2020</span>
<span style="left:761.13px;top:424.86px;font-size:16px;font-weight:bold;color:#000;transform:scaleX(1.1650);transform-origin:0 0;">Медиум ПП</span>
<span style="left:913.60px;top:424.86px;font-size:16px;font-weight:bold;color:#000;transform:scaleX(1.1617);transform-origin:0 0;">Апт N<i style="font-style:normal;letter-spacing:0.4px">º</i>003 пг<i style="font-style:normal;letter-spacing:-0.9px">..</i>.</span>
<span style="left:1050.30px;top:424.86px;font-size:16px;font-weight:bold;color:#000;transform:scaleX(1.1650);transform-origin:0 0;">Апт N<i style="font-style:normal;letter-spacing:0.4px">º</i>003 пгт.Бар<i style="font-style:normal;letter-spacing:-0.9px">..</i>.</span>
<span style="left:1426.59px;top:424.86px;font-size:16px;font-weight:bold;color:#000;transform:scaleX(1.1650);transform-origin:0 0;">1 764,0800</span>
<span style="left:1583.13px;top:424.86px;font-size:16px;font-weight:bold;color:#000;transform:scaleX(1.1650);transform-origin:0 0;">18.05.2020</span>
<span style="left:1706.13px;top:424.86px;font-size:16px;font-weight:bold;color:#000;transform:scaleX(1.1650);transform-origin:0 0;">13:26:01</span>
<span style="left:1835.13px;top:424.86px;font-size:16px;font-weight:bold;color:#000;transform:scaleX(1.1650);transform-origin:0 0;">N<i style="font-style:normal;letter-spacing:0.4px">º</i>03,смт.<i style="font-style:normal;letter-spacing:-0.9px">..</i>.</span>
<span style="left:23.70px;top:453.36px;font-size:16px;font-weight:bold;color:#000;transform:scaleX(0.9317);transform-origin:0 0;">5<i style="font-style:normal;letter-spacing:-0.9px">..</i>.</span>
<span style="left:81.63px;top:453.36px;font-size:16px;font-weight:bold;color:#000;transform:scaleX(1.1650);transform-origin:0 0;">Нет</span>
<span style="left:165.60px;top:453.36px;font-size:16px;font-weight:bold;color:#000;transform:scaleX(1.1650);transform-origin:0 0;">0763</span>
<span style="left:369.30px;top:453.36px;font-size:16px;font-weight:bold;color:#000;transform:scaleX(1.1650);transform-origin:0 0;">04.05.2020</span>
<span style="left:503.44px;top:453.36px;font-size:16px;font-weight:bold;color:#000;transform:scaleX(1.1650);transform-origin:0 0;">13.05.2020</span>
<span style="left:652.80px;top:453.36px;font-size:16px;font-weight:bold;color:#000;transform:scaleX(1.1650);transform-origin:0 0;">04.05.2020</span>
<span style="left:761.13px;top:453.36px;font-size:16px;font-weight:bold;color:#000;transform:scaleX(1.1650);transform-origin:0 0;">Медиум ПП</span>
<span style="left:913.60px;top:453.36px;font-size:16px;font-weight:bold;color:#000;transform:scaleX(1.1617);transform-origin:0 0;">Апт N<i style="font-style:normal;letter-spacing:0.4px">º</i>003 пг<i style="font-style:normal;letter-spacing:-0.9px">..</i>.</span>
<span style="left:1050.30px;top:453.36px;font-size:16px;font-weight:bold;color:#000;transform:scaleX(1.1650);transform-origin:0 0;">Апт N<i style="font-style:normal;letter-spacing:0.4px">º</i>003 пгт.Бар<i style="font-style:normal;letter-spacing:-0.9px">..</i>.</span>
<span style="left:1442.14px;top:453.36px;font-size:16px;font-weight:bold;color:#000;transform:scaleX(1.1650);transform-origin:0 0;">160,0000</span>
<span style="left:1583.13px;top:453.36px;font-size:16px;font-weight:bold;color:#000;transform:scaleX(1.1650);transform-origin:0 0;">18.05.2020</span>
<span style="left:1706.13px;top:453.36px;font-size:16px;font-weight:bold;color:#000;transform:scaleX(1.1650);transform-origin:0 0;">13:24:54</span>
<span style="left:1835.13px;top:453.36px;font-size:16px;font-weight:bold;color:#000;transform:scaleX(1.1650);transform-origin:0 0;">N<i style="font-style:normal;letter-spacing:0.4px">º</i>03,смт.<i style="font-style:normal;letter-spacing:-0.9px">..</i>.</span>
<span style="left:23.70px;top:481.86px;font-size:16px;font-weight:bold;color:#000;transform:scaleX(0.9317);transform-origin:0 0;">2<i style="font-style:normal;letter-spacing:-0.9px">..</i>.</span>
<span style="left:81.63px;top:481.86px;font-size:16px;font-weight:bold;color:#000;transform:scaleX(1.1650);transform-origin:0 0;">Нет</span>
<span style="left:165.60px;top:481.86px;font-size:16px;font-weight:bold;color:#000;transform:scaleX(1.0986);transform-origin:0 0;">YZ7<i style="font-style:normal;letter-spacing:-0.9px">..</i>.</span>
<span style="left:369.30px;top:481.86px;font-size:16px;font-weight:bold;color:#000;transform:scaleX(1.1650);transform-origin:0 0;">04.05.2020</span>
<span style="left:504.60px;top:481.86px;font-size:16px;font-weight:bold;color:#000;transform:scaleX(1.1650);transform-origin:0 0;">07.05.2020</span>
<span style="left:651.63px;top:481.86px;font-size:16px;font-weight:bold;color:#000;transform:scaleX(1.1650);transform-origin:0 0;">13.06.2020</span>
<span style="left:762.30px;top:481.86px;font-size:16px;font-weight:bold;color:#000;transform:scaleX(1.1650);transform-origin:0 0;">(офіс)</span>
<span style="left:913.60px;top:481.86px;font-size:16px;font-weight:bold;color:#000;transform:scaleX(1.1617);transform-origin:0 0;">Апт N<i style="font-style:normal;letter-spacing:0.4px">º</i>003 пг<i style="font-style:normal;letter-spacing:-0.9px">..</i>.</span>
<span style="left:1426.59px;top:481.86px;font-size:16px;font-weight:bold;color:#000;transform:scaleX(1.1650);transform-origin:0 0;">1 606,8400</span>
<span style="left:1584.30px;top:481.86px;font-size:16px;font-weight:bold;color:#000;transform:scaleX(1.1650);transform-origin:0 0;">07.05.2020</span>
<span style="left:1706.13px;top:481.86px;font-size:16px;font-weight:bold;color:#000;transform:scaleX(1.1650);transform-origin:0 0;">13:06:08</span>
<span style="left:1836.30px;top:481.86px;font-size:16px;font-weight:bold;color:#000;transform:scaleX(1.0984);transform-origin:0 0;">А N<i style="font-style:normal;letter-spacing:0.4px">º</i>3, смт<i style="font-style:normal;letter-spacing:-0.9px">..</i>.</span>
<span style="left:23.70px;top:510.36px;font-size:16px;font-weight:bold;color:#000;transform:scaleX(0.9317);transform-origin:0 0;">3<i style="font-style:normal;letter-spacing:-0.9px">..</i>.</span>
<span style="left:81.63px;top:510.36px;font-size:16px;font-weight:bold;color:#000;transform:scaleX(1.1650);transform-origin:0 0;">Нет</span>
<span style="left:165.60px;top:510.36px;font-size:16px;font-weight:bold;color:#000;transform:scaleX(1.1650);transform-origin:0 0;">426<i style="font-style:normal;letter-spacing:-0.9px">..</i>.</span>
<span style="left:369.30px;top:510.36px;font-size:16px;font-weight:bold;color:#000;transform:scaleX(1.1650);transform-origin:0 0;">04.05.2020</span>
<span style="left:503.44px;top:510.36px;font-size:16px;font-weight:bold;color:#000;transform:scaleX(1.1650);transform-origin:0 0;">10.05.2020</span>
<span style="left:652.80px;top:510.36px;font-size:16px;font-weight:bold;color:#000;transform:scaleX(1.1650);transform-origin:0 0;">08.06.2020</span>
<span style="left:761.13px;top:510.36px;font-size:16px;font-weight:bold;color:#000;transform:scaleX(1.1650);transform-origin:0 0;">ВЕНТА ООО</span>
<span style="left:913.60px;top:510.36px;font-size:16px;font-weight:bold;color:#000;transform:scaleX(1.1617);transform-origin:0 0;">Апт N<i style="font-style:normal;letter-spacing:0.4px">º</i>003 пг<i style="font-style:normal;letter-spacing:-0.9px">..</i>.</span>
<span style="left:1050.30px;top:510.36px;font-size:16px;font-weight:bold;color:#000;transform:scaleX(1.1650);transform-origin:0 0;">Апт N<i style="font-style:normal;letter-spacing:0.4px">º</i>003 пгт.Бар<i style="font-style:normal;letter-spacing:-0.9px">..</i>.</span>
<span style="left:1442.14px;top:510.36px;font-size:16px;font-weight:bold;color:#000;transform:scaleX(1.1650);transform-origin:0 0;">897,9600</span>
<span style="left:1583.13px;top:510.36px;font-size:16px;font-weight:bold;color:#000;transform:scaleX(1.1650);transform-origin:0 0;">10.05.2020</span>
<span style="left:1706.13px;top:510.36px;font-size:16px;font-weight:bold;color:#000;transform:scaleX(1.1650);transform-origin:0 0;">16:26:44</span>
<span style="left:1836.30px;top:510.36px;font-size:16px;font-weight:bold;color:#000;transform:scaleX(1.1650);transform-origin:0 0;">Аптека <i style="font-style:normal;letter-spacing:-0.9px">..</i>.</span>
<span style="left:23.70px;top:538.86px;font-size:16px;font-weight:bold;color:#000;transform:scaleX(0.9317);transform-origin:0 0;">3<i style="font-style:normal;letter-spacing:-0.9px">..</i>.</span>
<span style="left:81.63px;top:538.86px;font-size:16px;font-weight:bold;color:#000;transform:scaleX(1.1650);transform-origin:0 0;">Нет</span>
<span style="left:165.60px;top:538.86px;font-size:16px;font-weight:bold;color:#000;transform:scaleX(1.1650);transform-origin:0 0;">426<i style="font-style:normal;letter-spacing:-0.9px">..</i>.</span>
<span style="left:369.30px;top:538.86px;font-size:16px;font-weight:bold;color:#000;transform:scaleX(1.1650);transform-origin:0 0;">04.05.2020</span>
<span style="left:503.44px;top:538.86px;font-size:16px;font-weight:bold;color:#000;transform:scaleX(1.1650);transform-origin:0 0;">10.05.2020</span>
<span style="left:652.80px;top:538.86px;font-size:16px;font-weight:bold;color:#000;transform:scaleX(1.1650);transform-origin:0 0;">08.06.2020</span>
<span style="left:761.13px;top:538.86px;font-size:16px;font-weight:bold;color:#000;transform:scaleX(1.1650);transform-origin:0 0;">ВЕНТА ООО</span>
<span style="left:913.60px;top:538.86px;font-size:16px;font-weight:bold;color:#000;transform:scaleX(1.1617);transform-origin:0 0;">Апт N<i style="font-style:normal;letter-spacing:0.4px">º</i>003 пг<i style="font-style:normal;letter-spacing:-0.9px">..</i>.</span>
<span style="left:1050.30px;top:538.86px;font-size:16px;font-weight:bold;color:#000;transform:scaleX(1.1650);transform-origin:0 0;">Апт N<i style="font-style:normal;letter-spacing:0.4px">º</i>003 пгт.Бар<i style="font-style:normal;letter-spacing:-0.9px">..</i>.</span>
<span style="left:1442.14px;top:538.86px;font-size:16px;font-weight:bold;color:#000;transform:scaleX(1.1650);transform-origin:0 0;">302,6800</span>
<span style="left:1583.13px;top:538.86px;font-size:16px;font-weight:bold;color:#000;transform:scaleX(1.1650);transform-origin:0 0;">10.05.2020</span>
<span style="left:1706.13px;top:538.86px;font-size:16px;font-weight:bold;color:#000;transform:scaleX(1.1650);transform-origin:0 0;">16:26:38</span>
<span style="left:1836.30px;top:538.86px;font-size:16px;font-weight:bold;color:#000;transform:scaleX(1.1650);transform-origin:0 0;">Аптека <i style="font-style:normal;letter-spacing:-0.9px">..</i>.</span>
<span style="left:23.70px;top:567.36px;font-size:16px;font-weight:bold;color:#000;transform:scaleX(0.9317);transform-origin:0 0;">2<i style="font-style:normal;letter-spacing:-0.9px">..</i>.</span>
<span style="left:81.63px;top:567.36px;font-size:16px;font-weight:bold;color:#000;transform:scaleX(1.1650);transform-origin:0 0;">Нет</span>
<span style="left:165.60px;top:567.36px;font-size:16px;font-weight:bold;color:#000;transform:scaleX(1.0986);transform-origin:0 0;">YZ7<i style="font-style:normal;letter-spacing:-0.9px">..</i>.</span>
<span style="left:369.30px;top:567.36px;font-size:16px;font-weight:bold;color:#000;transform:scaleX(1.1650);transform-origin:0 0;">04.05.2020</span>
<span style="left:504.60px;top:567.36px;font-size:16px;font-weight:bold;color:#000;transform:scaleX(1.1650);transform-origin:0 0;">07.05.2020</span>
<span style="left:651.63px;top:567.36px;font-size:16px;font-weight:bold;color:#000;transform:scaleX(1.1650);transform-origin:0 0;">13.06.2020</span>
<span style="left:762.30px;top:567.36px;font-size:16px;font-weight:bold;color:#000;transform:scaleX(1.1650);transform-origin:0 0;">(офіс)</span>
<span style="left:913.60px;top:567.36px;font-size:16px;font-weight:bold;color:#000;transform:scaleX(1.1617);transform-origin:0 0;">Апт N<i style="font-style:normal;letter-spacing:0.4px">º</i>003 пг<i style="font-style:normal;letter-spacing:-0.9px">..</i>.</span>
<span style="left:1426.59px;top:567.36px;font-size:16px;font-weight:bold;color:#000;transform:scaleX(1.1650);transform-origin:0 0;">1 298,4700</span>
<span style="left:1584.30px;top:567.36px;font-size:16px;font-weight:bold;color:#000;transform:scaleX(1.1650);transform-origin:0 0;">07.05.2020</span>
<span style="left:1706.13px;top:567.36px;font-size:16px;font-weight:bold;color:#000;transform:scaleX(1.1650);transform-origin:0 0;">13:07:30</span>
<span style="left:1836.30px;top:567.36px;font-size:16px;font-weight:bold;color:#000;transform:scaleX(1.0984);transform-origin:0 0;">А N<i style="font-style:normal;letter-spacing:0.4px">º</i>3, смт<i style="font-style:normal;letter-spacing:-0.9px">..</i>.</span>
<span style="left:23.70px;top:595.86px;font-size:16px;font-weight:bold;color:#000;transform:scaleX(0.9317);transform-origin:0 0;">6<i style="font-style:normal;letter-spacing:-0.9px">..</i>.</span>
<span style="left:62.00px;top:595.86px;font-size:16px;font-weight:bold;color:#ff7f7f;">П</span>
<span style="left:81.63px;top:595.86px;font-size:16px;font-weight:bold;color:#000;transform:scaleX(1.1650);transform-origin:0 0;">Нет</span>
<span style="left:165.60px;top:595.86px;font-size:16px;font-weight:bold;color:#000;transform:scaleX(1.0986);transform-origin:0 0;">YZ7<i style="font-style:normal;letter-spacing:-0.9px">..</i>.</span>
<span style="left:329.78px;top:595.86px;font-size:16px;font-weight:bold;color:#000;transform:scaleX(1.1650);transform-origin:0 0;">151</span>
<span style="left:369.30px;top:595.86px;font-size:16px;font-weight:bold;color:#000;transform:scaleX(1.1650);transform-origin:0 0;">04.05.2020</span>
<span style="left:504.60px;top:595.86px;font-size:16px;font-weight:bold;color:#000;transform:scaleX(1.1650);transform-origin:0 0;">24.01.2022</span>
<span style="left:652.80px;top:595.86px;font-size:16px;font-weight:bold;color:#000;transform:scaleX(1.1650);transform-origin:0 0;">04.05.2020</span>
<span style="left:762.30px;top:595.86px;font-size:16px;font-weight:bold;color:#000;transform:scaleX(1.1626);transform-origin:0 0;">Апт N<i style="font-style:normal;letter-spacing:0.4px">º</i>003 пгт.<i style="font-style:normal;letter-spacing:-0.9px">..</i>.</span>
<span style="left:913.60px;top:595.86px;font-size:16px;font-weight:bold;color:#000;transform:scaleX(1.1617);transform-origin:0 0;">Апт N<i style="font-style:normal;letter-spacing:0.4px">º</i>003 пг<i style="font-style:normal;letter-spacing:-0.9px">..</i>.</span>
<span style="left:1050.30px;top:595.86px;font-size:16px;font-weight:bold;color:#000;transform:scaleX(1.1650);transform-origin:0 0;">Апт N<i style="font-style:normal;letter-spacing:0.4px">º</i> 76 г.Украин<i style="font-style:normal;letter-spacing:-0.9px">..</i>.</span>
<span style="left:1426.59px;top:595.86px;font-size:16px;font-weight:bold;color:#000;transform:scaleX(1.1650);transform-origin:0 0;">2 140,0000</span>
<span style="left:1528.30px;top:595.86px;font-size:16px;font-weight:normal;color:#000;letter-spacing:0.600px;">GIFT</span>
<span style="left:1584.30px;top:595.86px;font-size:16px;font-weight:bold;color:#000;transform:scaleX(1.1650);transform-origin:0 0;">24.01.2022</span>
<span style="left:1706.13px;top:595.86px;font-size:16px;font-weight:bold;color:#000;transform:scaleX(1.1650);transform-origin:0 0;">17:16:04</span>
<span style="left:1836.30px;top:595.86px;font-size:16px;font-weight:bold;color:#000;transform:scaleX(1.0984);transform-origin:0 0;">А N<i style="font-style:normal;letter-spacing:0.4px">º</i>3, смт<i style="font-style:normal;letter-spacing:-0.9px">..</i>.</span>
<span style="left:23.70px;top:624.36px;font-size:16px;font-weight:bold;color:#000;transform:scaleX(0.9317);transform-origin:0 0;">3<i style="font-style:normal;letter-spacing:-0.9px">..</i>.</span>
<span style="left:81.63px;top:624.36px;font-size:16px;font-weight:bold;color:#000;transform:scaleX(1.1650);transform-origin:0 0;">Нет</span>
<span style="left:165.60px;top:624.36px;font-size:16px;font-weight:bold;color:#000;transform:scaleX(1.0986);transform-origin:0 0;">YZ7<i style="font-style:normal;letter-spacing:-0.9px">..</i>.</span>
<span style="left:369.30px;top:624.36px;font-size:16px;font-weight:bold;color:#000;transform:scaleX(1.1650);transform-origin:0 0;">04.05.2020</span>
<span style="left:504.60px;top:624.36px;font-size:16px;font-weight:bold;color:#000;transform:scaleX(1.1650);transform-origin:0 0;">08.05.2020</span>
<span style="left:651.63px;top:624.36px;font-size:16px;font-weight:bold;color:#000;transform:scaleX(1.1650);transform-origin:0 0;">13.06.2020</span>
<span style="left:761.13px;top:624.36px;font-size:16px;font-weight:bold;color:#000;transform:scaleX(1.1650);transform-origin:0 0;">БаДМ ТОВ</span>
<span style="left:913.60px;top:624.36px;font-size:16px;font-weight:bold;color:#000;transform:scaleX(1.1617);transform-origin:0 0;">Апт N<i style="font-style:normal;letter-spacing:0.4px">º</i>003 пг<i style="font-style:normal;letter-spacing:-0.9px">..</i>.</span>
<span style="left:1050.30px;top:624.36px;font-size:16px;font-weight:bold;color:#000;transform:scaleX(1.1650);transform-origin:0 0;">Апт N<i style="font-style:normal;letter-spacing:0.4px">º</i>003 пгт.Бар<i style="font-style:normal;letter-spacing:-0.9px">..</i>.</span>
<span style="left:1416.22px;top:624.36px;font-size:16px;font-weight:bold;color:#000;transform:scaleX(1.1650);transform-origin:0 0;">12 228,0400</span>
<span style="left:1583.13px;top:624.36px;font-size:16px;font-weight:bold;color:#000;transform:scaleX(1.1650);transform-origin:0 0;">10.05.2020</span>
<span style="left:1706.13px;top:624.36px;font-size:16px;font-weight:bold;color:#000;transform:scaleX(1.1650);transform-origin:0 0;">15:33:28</span>
<span style="left:1836.30px;top:624.36px;font-size:16px;font-weight:bold;color:#000;transform:scaleX(1.0984);transform-origin:0 0;">А N<i style="font-style:normal;letter-spacing:0.4px">º</i>3, смт<i style="font-style:normal;letter-spacing:-0.9px">..</i>.</span>
<span style="left:23.70px;top:652.86px;font-size:16px;font-weight:bold;color:#000;transform:scaleX(0.9317);transform-origin:0 0;">3<i style="font-style:normal;letter-spacing:-0.9px">..</i>.</span>
<span style="left:81.63px;top:652.86px;font-size:16px;font-weight:bold;color:#000;transform:scaleX(1.1650);transform-origin:0 0;">Нет</span>
<span style="left:165.60px;top:652.86px;font-size:16px;font-weight:bold;color:#000;transform:scaleX(1.1650);transform-origin:0 0;">426<i style="font-style:normal;letter-spacing:-0.9px">..</i>.</span>
<span style="left:369.30px;top:652.86px;font-size:16px;font-weight:bold;color:#000;transform:scaleX(1.1650);transform-origin:0 0;">04.05.2020</span>
<span style="left:504.60px;top:652.86px;font-size:16px;font-weight:bold;color:#000;transform:scaleX(1.1650);transform-origin:0 0;">08.05.2020</span>
<span style="left:652.80px;top:652.86px;font-size:16px;font-weight:bold;color:#000;transform:scaleX(1.1650);transform-origin:0 0;">08.06.2020</span>
<span style="left:761.13px;top:652.86px;font-size:16px;font-weight:bold;color:#000;transform:scaleX(1.1650);transform-origin:0 0;">ВЕНТА ООО</span>
<span style="left:913.60px;top:652.86px;font-size:16px;font-weight:bold;color:#000;transform:scaleX(1.1617);transform-origin:0 0;">Апт N<i style="font-style:normal;letter-spacing:0.4px">º</i>003 пг<i style="font-style:normal;letter-spacing:-0.9px">..</i>.</span>
<span style="left:1050.30px;top:652.86px;font-size:16px;font-weight:bold;color:#000;transform:scaleX(1.1650);transform-origin:0 0;">Апт N<i style="font-style:normal;letter-spacing:0.4px">º</i>003 пгт.Бар<i style="font-style:normal;letter-spacing:-0.9px">..</i>.</span>
<span style="left:1452.50px;top:652.86px;font-size:16px;font-weight:bold;color:#000;transform:scaleX(1.1650);transform-origin:0 0;">81,5500</span>
<span style="left:1583.13px;top:652.86px;font-size:16px;font-weight:bold;color:#000;transform:scaleX(1.1650);transform-origin:0 0;">10.05.2020</span>
<span style="left:1706.13px;top:652.86px;font-size:16px;font-weight:bold;color:#000;transform:scaleX(1.1650);transform-origin:0 0;">15:33:20</span>
<span style="left:1836.30px;top:652.86px;font-size:16px;font-weight:bold;color:#000;transform:scaleX(1.1650);transform-origin:0 0;">Аптека <i style="font-style:normal;letter-spacing:-0.9px">..</i>.</span>
<span style="left:23.70px;top:681.36px;font-size:16px;font-weight:bold;color:#000;transform:scaleX(0.9317);transform-origin:0 0;">3<i style="font-style:normal;letter-spacing:-0.9px">..</i>.</span>
<span style="left:81.63px;top:681.36px;font-size:16px;font-weight:bold;color:#000;transform:scaleX(1.1650);transform-origin:0 0;">Нет</span>
<span style="left:165.60px;top:681.36px;font-size:16px;font-weight:bold;color:#000;transform:scaleX(1.0986);transform-origin:0 0;">YZ7<i style="font-style:normal;letter-spacing:-0.9px">..</i>.</span>
<span style="left:369.30px;top:681.36px;font-size:16px;font-weight:bold;color:#000;transform:scaleX(1.1650);transform-origin:0 0;">04.05.2020</span>
<span style="left:504.60px;top:681.36px;font-size:16px;font-weight:bold;color:#000;transform:scaleX(1.1650);transform-origin:0 0;">08.05.2020</span>
<span style="left:651.63px;top:681.36px;font-size:16px;font-weight:bold;color:#000;transform:scaleX(1.1650);transform-origin:0 0;">13.06.2020</span>
<span style="left:761.13px;top:681.36px;font-size:16px;font-weight:bold;color:#000;transform:scaleX(1.1650);transform-origin:0 0;">БаДМ ТОВ</span>
<span style="left:913.60px;top:681.36px;font-size:16px;font-weight:bold;color:#000;transform:scaleX(1.1617);transform-origin:0 0;">Апт N<i style="font-style:normal;letter-spacing:0.4px">º</i>003 пг<i style="font-style:normal;letter-spacing:-0.9px">..</i>.</span>
<span style="left:1050.30px;top:681.36px;font-size:16px;font-weight:bold;color:#000;transform:scaleX(1.1650);transform-origin:0 0;">Апт N<i style="font-style:normal;letter-spacing:0.4px">º</i>003 пгт.Бар<i style="font-style:normal;letter-spacing:-0.9px">..</i>.</span>
<span style="left:1442.14px;top:681.36px;font-size:16px;font-weight:bold;color:#000;transform:scaleX(1.1650);transform-origin:0 0;">997,1200</span>
<span style="left:1583.13px;top:681.36px;font-size:16px;font-weight:bold;color:#000;transform:scaleX(1.1650);transform-origin:0 0;">10.05.2020</span>
<span style="left:1706.13px;top:681.36px;font-size:16px;font-weight:bold;color:#000;transform:scaleX(1.1650);transform-origin:0 0;">15:33:12</span>
<span style="left:1836.30px;top:681.36px;font-size:16px;font-weight:bold;color:#000;transform:scaleX(1.0984);transform-origin:0 0;">А N<i style="font-style:normal;letter-spacing:0.4px">º</i>3, смт<i style="font-style:normal;letter-spacing:-0.9px">..</i>.</span>
<span style="left:23.70px;top:709.86px;font-size:16px;font-weight:bold;color:#000;transform:scaleX(0.9317);transform-origin:0 0;">5<i style="font-style:normal;letter-spacing:-0.9px">..</i>.</span>
<span style="left:81.63px;top:709.86px;font-size:16px;font-weight:bold;color:#000;transform:scaleX(1.1650);transform-origin:0 0;">Нет</span>
<span style="left:165.60px;top:709.86px;font-size:16px;font-weight:bold;color:#000;transform:scaleX(1.1650);transform-origin:0 0;">383<i style="font-style:normal;letter-spacing:-0.9px">..</i>.</span>
<span style="left:369.30px;top:709.86px;font-size:16px;font-weight:bold;color:#000;transform:scaleX(1.1650);transform-origin:0 0;">04.05.2020</span>
<span style="left:503.44px;top:709.86px;font-size:16px;font-weight:bold;color:#000;transform:scaleX(1.1650);transform-origin:0 0;">13.05.2020</span>
<span style="left:651.63px;top:709.86px;font-size:16px;font-weight:bold;color:#000;transform:scaleX(1.1650);transform-origin:0 0;">19.06.2020</span>
<span style="left:762.30px;top:709.86px;font-size:16px;font-weight:bold;color:#000;transform:scaleX(1.1650);transform-origin:0 0;">Фармако ТОВ</span>
<span style="left:913.60px;top:709.86px;font-size:16px;font-weight:bold;color:#000;transform:scaleX(1.1617);transform-origin:0 0;">Апт N<i style="font-style:normal;letter-spacing:0.4px">º</i>003 пг<i style="font-style:normal;letter-spacing:-0.9px">..</i>.</span>
<span style="left:1050.30px;top:709.86px;font-size:16px;font-weight:bold;color:#000;transform:scaleX(1.1650);transform-origin:0 0;">Апт N<i style="font-style:normal;letter-spacing:0.4px">º</i>003 пгт.Бар<i style="font-style:normal;letter-spacing:-0.9px">..</i>.</span>
<span style="left:1426.59px;top:709.86px;font-size:16px;font-weight:bold;color:#000;transform:scaleX(1.1650);transform-origin:0 0;">1 007,9000</span>
<span style="left:1583.13px;top:709.86px;font-size:16px;font-weight:bold;color:#000;transform:scaleX(1.1650);transform-origin:0 0;">18.05.2020</span>
<span style="left:1706.13px;top:709.86px;font-size:16px;font-weight:bold;color:#000;transform:scaleX(1.1650);transform-origin:0 0;">13:28:33</span>
<span style="left:1836.30px;top:709.86px;font-size:16px;font-weight:bold;color:#000;transform:scaleX(1.1650);transform-origin:0 0;">Z:P1-3a-0<i style="font-style:normal;letter-spacing:-0.9px">..</i>.</span>
<span style="left:23.70px;top:738.36px;font-size:16px;font-weight:bold;color:#000;transform:scaleX(0.9317);transform-origin:0 0;">3<i style="font-style:normal;letter-spacing:-0.9px">..</i>.</span>
<span style="left:81.63px;top:738.36px;font-size:16px;font-weight:bold;color:#000;transform:scaleX(1.1650);transform-origin:0 0;">Нет</span>
<span style="left:165.60px;top:738.36px;font-size:16px;font-weight:bold;color:#000;transform:scaleX(1.1650);transform-origin:0 0;">426<i style="font-style:normal;letter-spacing:-0.9px">..</i>.</span>
<span style="left:369.30px;top:738.36px;font-size:16px;font-weight:bold;color:#000;transform:scaleX(1.1650);transform-origin:0 0;">04.05.2020</span>
<span style="left:503.44px;top:738.36px;font-size:16px;font-weight:bold;color:#000;transform:scaleX(1.1650);transform-origin:0 0;">10.05.2020</span>
<span style="left:652.80px;top:738.36px;font-size:16px;font-weight:bold;color:#000;transform:scaleX(1.1650);transform-origin:0 0;">08.06.2020</span>
<span style="left:761.13px;top:738.36px;font-size:16px;font-weight:bold;color:#000;transform:scaleX(1.1650);transform-origin:0 0;">ВЕНТА ООО</span>
<span style="left:913.60px;top:738.36px;font-size:16px;font-weight:bold;color:#000;transform:scaleX(1.1617);transform-origin:0 0;">Апт N<i style="font-style:normal;letter-spacing:0.4px">º</i>003 пг<i style="font-style:normal;letter-spacing:-0.9px">..</i>.</span>
<span style="left:1050.30px;top:738.36px;font-size:16px;font-weight:bold;color:#000;transform:scaleX(1.1650);transform-origin:0 0;">Апт N<i style="font-style:normal;letter-spacing:0.4px">º</i>003 пгт.Бар<i style="font-style:normal;letter-spacing:-0.9px">..</i>.</span>
<span style="left:1426.59px;top:738.36px;font-size:16px;font-weight:bold;color:#000;transform:scaleX(1.1650);transform-origin:0 0;">6 131,5600</span>
<span style="left:1583.13px;top:738.36px;font-size:16px;font-weight:bold;color:#000;transform:scaleX(1.1650);transform-origin:0 0;">10.05.2020</span>
<span style="left:1706.13px;top:738.36px;font-size:16px;font-weight:bold;color:#000;transform:scaleX(1.1650);transform-origin:0 0;">16:26:28</span>
<span style="left:1836.30px;top:738.36px;font-size:16px;font-weight:bold;color:#000;transform:scaleX(1.1650);transform-origin:0 0;">Аптека <i style="font-style:normal;letter-spacing:-0.9px">..</i>.</span>
<span style="left:23.70px;top:766.86px;font-size:16px;font-weight:bold;color:#000;transform:scaleX(0.9317);transform-origin:0 0;">4<i style="font-style:normal;letter-spacing:-0.9px">..</i>.</span>
<span style="left:81.63px;top:766.86px;font-size:16px;font-weight:bold;color:#000;transform:scaleX(1.1650);transform-origin:0 0;">Нет</span>
<span style="left:164.45px;top:766.86px;font-size:16px;font-weight:bold;color:#000;transform:scaleX(1.1497);transform-origin:0 0;">E20<i style="font-style:normal;letter-spacing:-0.9px">..</i>.</span>
<span style="left:369.30px;top:766.86px;font-size:16px;font-weight:bold;color:#000;transform:scaleX(1.1650);transform-origin:0 0;">05.05.2020</span>
<span style="left:503.44px;top:766.86px;font-size:16px;font-weight:bold;color:#000;transform:scaleX(1.1650);transform-origin:0 0;">14.05.2020</span>
<span style="left:652.80px;top:766.86px;font-size:16px;font-weight:bold;color:#000;transform:scaleX(1.1650);transform-origin:0 0;">05.05.2020</span>
<span style="left:762.30px;top:766.86px;font-size:16px;font-weight:bold;color:#000;transform:scaleX(1.1650);transform-origin:0 0;">Экомед ООО</span>
<span style="left:913.60px;top:766.86px;font-size:16px;font-weight:bold;color:#000;transform:scaleX(1.1617);transform-origin:0 0;">Апт N<i style="font-style:normal;letter-spacing:0.4px">º</i>003 пг<i style="font-style:normal;letter-spacing:-0.9px">..</i>.</span>
<span style="left:1050.30px;top:766.86px;font-size:16px;font-weight:bold;color:#000;transform:scaleX(1.1650);transform-origin:0 0;">Апт N<i style="font-style:normal;letter-spacing:0.4px">º</i>003 пгт.Бар<i style="font-style:normal;letter-spacing:-0.9px">..</i>.</span>
<span style="left:1442.14px;top:766.86px;font-size:16px;font-weight:bold;color:#000;transform:scaleX(1.1650);transform-origin:0 0;">553,5500</span>
<span style="left:1583.13px;top:766.86px;font-size:16px;font-weight:bold;color:#000;transform:scaleX(1.1650);transform-origin:0 0;">15.05.2020</span>
<span style="left:1707.30px;top:766.86px;font-size:16px;font-weight:bold;color:#000;transform:scaleX(1.1650);transform-origin:0 0;">20:52:09</span>
<span style="left:1836.30px;top:766.86px;font-size:16px;font-weight:bold;color:#000;transform:scaleX(1.1650);transform-origin:0 0;">Апт N<i style="font-style:normal;letter-spacing:0.4px">º</i>00<i style="font-style:normal;letter-spacing:-0.9px">..</i>.</span>
<span style="left:23.70px;top:795.36px;font-size:16px;font-weight:bold;color:#000;transform:scaleX(0.9317);transform-origin:0 0;">4<i style="font-style:normal;letter-spacing:-0.9px">..</i>.</span>
<span style="left:81.63px;top:795.36px;font-size:16px;font-weight:bold;color:#000;transform:scaleX(1.1650);transform-origin:0 0;">Нет</span>
<span style="left:164.45px;top:795.36px;font-size:16px;font-weight:bold;color:#000;transform:scaleX(1.1497);transform-origin:0 0;">E20<i style="font-style:normal;letter-spacing:-0.9px">..</i>.</span>
<span style="left:369.30px;top:795.36px;font-size:16px;font-weight:bold;color:#000;transform:scaleX(1.1650);transform-origin:0 0;">05.05.2020</span>
<span style="left:503.44px;top:795.36px;font-size:16px;font-weight:bold;color:#000;transform:scaleX(1.1650);transform-origin:0 0;">15.05.2020</span>
<span style="left:652.80px;top:795.36px;font-size:16px;font-weight:bold;color:#000;transform:scaleX(1.1650);transform-origin:0 0;">04.06.2020</span>
<span style="left:762.30px;top:795.36px;font-size:16px;font-weight:bold;color:#000;transform:scaleX(1.1650);transform-origin:0 0;">Экомед ООО</span>
<span style="left:913.60px;top:795.36px;font-size:16px;font-weight:bold;color:#000;transform:scaleX(1.1617);transform-origin:0 0;">Апт N<i style="font-style:normal;letter-spacing:0.4px">º</i>003 пг<i style="font-style:normal;letter-spacing:-0.9px">..</i>.</span>
<span style="left:1050.30px;top:795.36px;font-size:16px;font-weight:bold;color:#000;transform:scaleX(1.1650);transform-origin:0 0;">Апт N<i style="font-style:normal;letter-spacing:0.4px">º</i>003 пгт.Бар<i style="font-style:normal;letter-spacing:-0.9px">..</i>.</span>
<span style="left:1426.59px;top:795.36px;font-size:16px;font-weight:bold;color:#000;transform:scaleX(1.1650);transform-origin:0 0;">3 840,5000</span>
<span style="left:1583.13px;top:795.36px;font-size:16px;font-weight:bold;color:#000;transform:scaleX(1.1650);transform-origin:0 0;">15.05.2020</span>
<span style="left:1707.30px;top:795.36px;font-size:16px;font-weight:bold;color:#000;transform:scaleX(1.1650);transform-origin:0 0;">20:52:25</span>
<span style="left:1836.30px;top:795.36px;font-size:16px;font-weight:bold;color:#000;transform:scaleX(1.1650);transform-origin:0 0;">Апт N<i style="font-style:normal;letter-spacing:0.4px">º</i>00<i style="font-style:normal;letter-spacing:-0.9px">..</i>.</span>
<span style="left:23.70px;top:823.86px;font-size:16px;font-weight:bold;color:#000;transform:scaleX(0.9317);transform-origin:0 0;">3<i style="font-style:normal;letter-spacing:-0.9px">..</i>.</span>
<span style="left:81.63px;top:823.86px;font-size:16px;font-weight:bold;color:#000;transform:scaleX(1.1650);transform-origin:0 0;">Нет</span>
<span style="left:165.60px;top:823.86px;font-size:16px;font-weight:bold;color:#000;transform:scaleX(1.0986);transform-origin:0 0;">YZ7<i style="font-style:normal;letter-spacing:-0.9px">..</i>.</span>
<span style="left:369.30px;top:823.86px;font-size:16px;font-weight:bold;color:#000;transform:scaleX(1.1650);transform-origin:0 0;">05.05.2020</span>
<span style="left:503.44px;top:823.86px;font-size:16px;font-weight:bold;color:#000;transform:scaleX(1.1650);transform-origin:0 0;">10.05.2020</span>
<span style="left:651.63px;top:823.86px;font-size:16px;font-weight:bold;color:#000;transform:scaleX(1.1650);transform-origin:0 0;">14.06.2020</span>
<span style="left:761.13px;top:823.86px;font-size:16px;font-weight:bold;color:#000;transform:scaleX(1.1650);transform-origin:0 0;">БаДМ ТОВ</span>
<span style="left:913.60px;top:823.86px;font-size:16px;font-weight:bold;color:#000;transform:scaleX(1.1617);transform-origin:0 0;">Апт N<i style="font-style:normal;letter-spacing:0.4px">º</i>003 пг<i style="font-style:normal;letter-spacing:-0.9px">..</i>.</span>
<span style="left:1050.30px;top:823.86px;font-size:16px;font-weight:bold;color:#000;transform:scaleX(1.1650);transform-origin:0 0;">Апт N<i style="font-style:normal;letter-spacing:0.4px">º</i>003 пгт.Бар<i style="font-style:normal;letter-spacing:-0.9px">..</i>.</span>
<span style="left:1452.50px;top:823.86px;font-size:16px;font-weight:bold;color:#000;transform:scaleX(1.1650);transform-origin:0 0;">20,7200</span>
<span style="left:1583.13px;top:823.86px;font-size:16px;font-weight:bold;color:#000;transform:scaleX(1.1650);transform-origin:0 0;">12.05.2020</span>
<span style="left:1707.30px;top:823.86px;font-size:16px;font-weight:bold;color:#000;transform:scaleX(1.1650);transform-origin:0 0;">20:27:14</span>
<span style="left:1836.30px;top:823.86px;font-size:16px;font-weight:bold;color:#000;transform:scaleX(1.0984);transform-origin:0 0;">А N<i style="font-style:normal;letter-spacing:0.4px">º</i>3, смт<i style="font-style:normal;letter-spacing:-0.9px">..</i>.</span>
<span style="left:23.70px;top:852.36px;font-size:16px;font-weight:bold;color:#000;transform:scaleX(0.9317);transform-origin:0 0;">4<i style="font-style:normal;letter-spacing:-0.9px">..</i>.</span>
<span style="left:81.63px;top:852.36px;font-size:16px;font-weight:bold;color:#000;transform:scaleX(1.1650);transform-origin:0 0;">Нет</span>
<span style="left:165.60px;top:852.36px;font-size:16px;font-weight:bold;color:#000;transform:scaleX(1.1650);transform-origin:0 0;">426<i style="font-style:normal;letter-spacing:-0.9px">..</i>.</span>
<span style="left:369.30px;top:852.36px;font-size:16px;font-weight:bold;color:#000;transform:scaleX(1.1650);transform-origin:0 0;">05.05.2020</span>
<span style="left:503.44px;top:852.36px;font-size:16px;font-weight:bold;color:#000;transform:scaleX(1.1650);transform-origin:0 0;">14.05.2020</span>
<span style="left:652.80px;top:852.36px;font-size:16px;font-weight:bold;color:#000;transform:scaleX(1.1650);transform-origin:0 0;">09.06.2020</span>
<span style="left:761.13px;top:852.36px;font-size:16px;font-weight:bold;color:#000;transform:scaleX(1.1650);transform-origin:0 0;">ВЕНТА ООО</span>
<span style="left:913.60px;top:852.36px;font-size:16px;font-weight:bold;color:#000;transform:scaleX(1.1617);transform-origin:0 0;">Апт N<i style="font-style:normal;letter-spacing:0.4px">º</i>003 пг<i style="font-style:normal;letter-spacing:-0.9px">..</i>.</span>
<span style="left:1050.30px;top:852.36px;font-size:16px;font-weight:bold;color:#000;transform:scaleX(1.1650);transform-origin:0 0;">Апт N<i style="font-style:normal;letter-spacing:0.4px">º</i>003 пгт.Бар<i style="font-style:normal;letter-spacing:-0.9px">..</i>.</span>
<span style="left:1442.14px;top:852.36px;font-size:16px;font-weight:bold;color:#000;transform:scaleX(1.1650);transform-origin:0 0;">100,2300</span>
<span style="left:1583.13px;top:852.36px;font-size:16px;font-weight:bold;color:#000;transform:scaleX(1.1650);transform-origin:0 0;">15.05.2020</span>
<span style="left:1707.30px;top:852.36px;font-size:16px;font-weight:bold;color:#000;transform:scaleX(1.1650);transform-origin:0 0;">20:51:57</span>
<span style="left:1836.30px;top:852.36px;font-size:16px;font-weight:bold;color:#000;transform:scaleX(1.1650);transform-origin:0 0;">Аптека <i style="font-style:normal;letter-spacing:-0.9px">..</i>.</span>
<span style="left:23.70px;top:880.86px;font-size:16px;font-weight:bold;color:#000;transform:scaleX(0.9317);transform-origin:0 0;">4<i style="font-style:normal;letter-spacing:-0.9px">..</i>.</span>
<span style="left:81.63px;top:880.86px;font-size:16px;font-weight:bold;color:#000;transform:scaleX(1.1650);transform-origin:0 0;">Нет</span>
<span style="left:165.60px;top:880.86px;font-size:16px;font-weight:bold;color:#000;transform:scaleX(1.1650);transform-origin:0 0;">426<i style="font-style:normal;letter-spacing:-0.9px">..</i>.</span>
<span style="left:369.30px;top:880.86px;font-size:16px;font-weight:bold;color:#000;transform:scaleX(1.1650);transform-origin:0 0;">05.05.2020</span>
<span style="left:503.44px;top:880.86px;font-size:16px;font-weight:bold;color:#000;transform:scaleX(1.1650);transform-origin:0 0;">14.05.2020</span>
<span style="left:652.80px;top:880.86px;font-size:16px;font-weight:bold;color:#000;transform:scaleX(1.1650);transform-origin:0 0;">09.06.2020</span>
<span style="left:761.13px;top:880.86px;font-size:16px;font-weight:bold;color:#000;transform:scaleX(1.1650);transform-origin:0 0;">ВЕНТА ООО</span>
<span style="left:913.60px;top:880.86px;font-size:16px;font-weight:bold;color:#000;transform:scaleX(1.1617);transform-origin:0 0;">Апт N<i style="font-style:normal;letter-spacing:0.4px">º</i>003 пг<i style="font-style:normal;letter-spacing:-0.9px">..</i>.</span>
<span style="left:1050.30px;top:880.86px;font-size:16px;font-weight:bold;color:#000;transform:scaleX(1.1650);transform-origin:0 0;">Апт N<i style="font-style:normal;letter-spacing:0.4px">º</i>003 пгт.Бар<i style="font-style:normal;letter-spacing:-0.9px">..</i>.</span>
<span style="left:1442.14px;top:880.86px;font-size:16px;font-weight:bold;color:#000;transform:scaleX(1.1650);transform-origin:0 0;">141,2500</span>
<span style="left:1583.13px;top:880.86px;font-size:16px;font-weight:bold;color:#000;transform:scaleX(1.1650);transform-origin:0 0;">15.05.2020</span>
<span style="left:1707.30px;top:880.86px;font-size:16px;font-weight:bold;color:#000;transform:scaleX(1.1650);transform-origin:0 0;">20:51:42</span>
<span style="left:1836.30px;top:880.86px;font-size:16px;font-weight:bold;color:#000;transform:scaleX(1.1650);transform-origin:0 0;">Аптека <i style="font-style:normal;letter-spacing:-0.9px">..</i>.</span>
<span style="left:23.70px;top:909.86px;font-size:16px;font-weight:bold;color:#000;transform:scaleX(0.9317);transform-origin:0 0;">3<i style="font-style:normal;letter-spacing:-0.9px">..</i>.</span>
<span style="left:81.63px;top:909.86px;font-size:16px;font-weight:bold;color:#000;transform:scaleX(1.1650);transform-origin:0 0;">Нет</span>
<span style="left:165.60px;top:909.86px;font-size:16px;font-weight:bold;color:#000;transform:scaleX(1.1650);transform-origin:0 0;">261<i style="font-style:normal;letter-spacing:-0.9px">..</i>.</span>
<span style="left:369.30px;top:909.86px;font-size:16px;font-weight:bold;color:#000;transform:scaleX(1.1650);transform-origin:0 0;">05.05.2020</span>
<span style="left:503.44px;top:909.86px;font-size:16px;font-weight:bold;color:#000;transform:scaleX(1.1650);transform-origin:0 0;">10.05.2020</span>
<span style="left:652.80px;top:909.86px;font-size:16px;font-weight:bold;color:#000;transform:scaleX(1.1650);transform-origin:0 0;">09.06.2020</span>
<span style="left:762.30px;top:909.86px;font-size:16px;font-weight:bold;color:#000;transform:scaleX(1.0892);transform-origin:0 0;">Оптима фарм, <i style="font-style:normal;letter-spacing:-0.9px">..</i>.</span>
<span style="left:913.60px;top:909.86px;font-size:16px;font-weight:bold;color:#000;transform:scaleX(1.1617);transform-origin:0 0;">Апт N<i style="font-style:normal;letter-spacing:0.4px">º</i>003 пг<i style="font-style:normal;letter-spacing:-0.9px">..</i>.</span>
<span style="left:1050.30px;top:909.86px;font-size:16px;font-weight:bold;color:#000;transform:scaleX(1.1650);transform-origin:0 0;">Апт N<i style="font-style:normal;letter-spacing:0.4px">º</i>003 пгт.Бар<i style="font-style:normal;letter-spacing:-0.9px">..</i>.</span>
<span style="left:1442.14px;top:909.86px;font-size:16px;font-weight:bold;color:#000;transform:scaleX(1.1650);transform-origin:0 0;">457,0900</span>
<span style="left:1583.13px;top:909.86px;font-size:16px;font-weight:bold;color:#000;transform:scaleX(1.1650);transform-origin:0 0;">10.05.2020</span>
<span style="left:1706.13px;top:909.86px;font-size:16px;font-weight:bold;color:#000;transform:scaleX(1.1650);transform-origin:0 0;">17:00:52</span>
<span style="left:1835.22px;top:909.86px;font-size:16px;font-weight:bold;color:#000;transform:scaleX(1.0832);transform-origin:0 0;">вул. Ленін<i style="font-style:normal;letter-spacing:-0.9px">..</i>.</span>
<span style="left:23.70px;top:938.36px;font-size:16px;font-weight:bold;color:#000;transform:scaleX(0.9317);transform-origin:0 0;">3<i style="font-style:normal;letter-spacing:-0.9px">..</i>.</span>
<span style="left:81.63px;top:938.36px;font-size:16px;font-weight:bold;color:#000;transform:scaleX(1.1650);transform-origin:0 0;">Нет</span>
<span style="left:165.60px;top:938.36px;font-size:16px;font-weight:bold;color:#000;transform:scaleX(1.1650);transform-origin:0 0;">261<i style="font-style:normal;letter-spacing:-0.9px">..</i>.</span>
<span style="left:369.30px;top:938.36px;font-size:16px;font-weight:bold;color:#000;transform:scaleX(1.1650);transform-origin:0 0;">05.05.2020</span>
<span style="left:503.44px;top:938.36px;font-size:16px;font-weight:bold;color:#000;transform:scaleX(1.1650);transform-origin:0 0;">10.05.2020</span>
<span style="left:652.80px;top:938.36px;font-size:16px;font-weight:bold;color:#000;transform:scaleX(1.1650);transform-origin:0 0;">09.06.2020</span>
<span style="left:762.30px;top:938.36px;font-size:16px;font-weight:bold;color:#000;transform:scaleX(1.0892);transform-origin:0 0;">Оптима фарм, <i style="font-style:normal;letter-spacing:-0.9px">..</i>.</span>
<span style="left:913.60px;top:938.36px;font-size:16px;font-weight:bold;color:#000;transform:scaleX(1.1617);transform-origin:0 0;">Апт N<i style="font-style:normal;letter-spacing:0.4px">º</i>003 пг<i style="font-style:normal;letter-spacing:-0.9px">..</i>.</span>
<span style="left:1050.30px;top:938.36px;font-size:16px;font-weight:bold;color:#000;transform:scaleX(1.1650);transform-origin:0 0;">Апт N<i style="font-style:normal;letter-spacing:0.4px">º</i>003 пгт.Бар<i style="font-style:normal;letter-spacing:-0.9px">..</i>.</span>
<span style="left:1442.14px;top:938.36px;font-size:16px;font-weight:bold;color:#000;transform:scaleX(1.1650);transform-origin:0 0;">253,9000</span>
<span style="left:1583.13px;top:938.36px;font-size:16px;font-weight:bold;color:#000;transform:scaleX(1.1650);transform-origin:0 0;">10.05.2020</span>
<span style="left:1706.13px;top:938.36px;font-size:16px;font-weight:bold;color:#000;transform:scaleX(1.1650);transform-origin:0 0;">17:01:02</span>
<span style="left:1835.22px;top:938.36px;font-size:16px;font-weight:bold;color:#000;transform:scaleX(1.0832);transform-origin:0 0;">вул. Ленін<i style="font-style:normal;letter-spacing:-0.9px">..</i>.</span>
<span style="left:23.70px;top:966.86px;font-size:16px;font-weight:bold;color:#000;transform:scaleX(0.9317);transform-origin:0 0;">3<i style="font-style:normal;letter-spacing:-0.9px">..</i>.</span>
<span style="left:81.63px;top:966.86px;font-size:16px;font-weight:bold;color:#000;transform:scaleX(1.1650);transform-origin:0 0;">Нет</span>
<span style="left:165.60px;top:966.86px;font-size:16px;font-weight:bold;color:#000;transform:scaleX(1.0986);transform-origin:0 0;">YZ7<i style="font-style:normal;letter-spacing:-0.9px">..</i>.</span>
<span style="left:369.30px;top:966.86px;font-size:16px;font-weight:bold;color:#000;transform:scaleX(1.1650);transform-origin:0 0;">05.05.2020</span>
<span style="left:504.60px;top:966.86px;font-size:16px;font-weight:bold;color:#000;transform:scaleX(1.1650);transform-origin:0 0;">08.05.2020</span>
<span style="left:651.63px;top:966.86px;font-size:16px;font-weight:bold;color:#000;transform:scaleX(1.1650);transform-origin:0 0;">14.06.2020</span>
<span style="left:761.13px;top:966.86px;font-size:16px;font-weight:bold;color:#000;transform:scaleX(1.1650);transform-origin:0 0;">БаДМ ТОВ</span>
<span style="left:913.60px;top:966.86px;font-size:16px;font-weight:bold;color:#000;transform:scaleX(1.1617);transform-origin:0 0;">Апт N<i style="font-style:normal;letter-spacing:0.4px">º</i>003 пг<i style="font-style:normal;letter-spacing:-0.9px">..</i>.</span>
<span style="left:1050.30px;top:966.86px;font-size:16px;font-weight:bold;color:#000;transform:scaleX(1.1650);transform-origin:0 0;">Апт N<i style="font-style:normal;letter-spacing:0.4px">º</i>003 пгт.Бар<i style="font-style:normal;letter-spacing:-0.9px">..</i>.</span>
<span style="left:1426.59px;top:966.86px;font-size:16px;font-weight:bold;color:#000;transform:scaleX(1.1650);transform-origin:0 0;">3 831,9800</span>
<span style="left:1583.13px;top:966.86px;font-size:16px;font-weight:bold;color:#000;transform:scaleX(1.1650);transform-origin:0 0;">10.05.2020</span>
<span style="left:1706.13px;top:966.86px;font-size:16px;font-weight:bold;color:#000;transform:scaleX(1.1650);transform-origin:0 0;">15:33:01</span>
<span style="left:1836.30px;top:966.86px;font-size:16px;font-weight:bold;color:#000;transform:scaleX(1.0984);transform-origin:0 0;">А N<i style="font-style:normal;letter-spacing:0.4px">º</i>3, смт<i style="font-style:normal;letter-spacing:-0.9px">..</i>.</span>
<span style="left:23.70px;top:995.36px;font-size:16px;font-weight:bold;color:#000;transform:scaleX(0.9317);transform-origin:0 0;">2<i style="font-style:normal;letter-spacing:-0.9px">..</i>.</span>
<span style="left:81.63px;top:995.36px;font-size:16px;font-weight:bold;color:#000;transform:scaleX(1.1650);transform-origin:0 0;">Нет</span>
<span style="left:164.44px;top:995.36px;font-size:16px;font-weight:bold;color:#000;transform:scaleX(1.1650);transform-origin:0 0;">1</span>
<span style="left:329.78px;top:995.36px;font-size:16px;font-weight:bold;color:#000;transform:scaleX(1.1650);transform-origin:0 0;">102</span>
<span style="left:369.30px;top:995.36px;font-size:16px;font-weight:bold;color:#000;transform:scaleX(1.1650);transform-origin:0 0;">05.05.2020</span>
<span style="left:504.60px;top:995.36px;font-size:16px;font-weight:bold;color:#000;transform:scaleX(1.1650);transform-origin:0 0;">05.05.2020</span>
<span style="left:652.80px;top:995.36px;font-size:16px;font-weight:bold;color:#000;transform:scaleX(1.1650);transform-origin:0 0;">05.05.2020</span>
<span style="left:762.30px;top:995.36px;font-size:16px;font-weight:bold;color:#000;transform:scaleX(1.1650);transform-origin:0 0;">(офіс)</span>
<span style="left:913.60px;top:995.36px;font-size:16px;font-weight:bold;color:#000;transform:scaleX(1.1617);transform-origin:0 0;">Апт N<i style="font-style:normal;letter-spacing:0.4px">º</i>003 пг<i style="font-style:normal;letter-spacing:-0.9px">..</i>.</span>
<span style="left:1405.86px;top:995.36px;font-size:16px;font-weight:bold;color:#000;transform:scaleX(1.1650);transform-origin:0 0;">324 621,2000</span>
<span style="left:1528.30px;top:995.36px;font-size:16px;font-weight:normal;color:#000;letter-spacing:0.600px;">GIFT</span>
<span style="left:1584.30px;top:995.36px;font-size:16px;font-weight:bold;color:#000;transform:scaleX(1.1650);transform-origin:0 0;">05.05.2020</span>
<span style="left:1706.13px;top:995.36px;font-size:16px;font-weight:bold;color:#000;transform:scaleX(1.1650);transform-origin:0 0;">17:57:13</span>
<span style="left:1836.30px;top:995.36px;font-size:16px;font-weight:bold;color:#000;transform:scaleX(1.1515);transform-origin:0 0;">XLS to EXP</span>
<span style="left:23.70px;top:1023.86px;font-size:16px;font-weight:bold;color:#000;transform:scaleX(0.9317);transform-origin:0 0;">2<i style="font-style:normal;letter-spacing:-0.9px">..</i>.</span>
<span style="left:81.63px;top:1023.86px;font-size:16px;font-weight:bold;color:#000;transform:scaleX(1.1650);transform-origin:0 0;">Нет</span>
<span style="left:164.44px;top:1023.86px;font-size:16px;font-weight:bold;color:#000;transform:scaleX(1.1650);transform-origin:0 0;">1</span>
<span style="left:329.78px;top:1023.86px;font-size:16px;font-weight:bold;color:#000;transform:scaleX(1.1650);transform-origin:0 0;">100</span>
<span style="left:369.30px;top:1023.86px;font-size:16px;font-weight:bold;color:#000;transform:scaleX(1.1650);transform-origin:0 0;">05.05.2020</span>
<span style="left:504.60px;top:1023.86px;font-size:16px;font-weight:bold;color:#000;transform:scaleX(1.1650);transform-origin:0 0;">05.05.2020</span>
<span style="left:652.80px;top:1023.86px;font-size:16px;font-weight:bold;color:#000;transform:scaleX(1.1650);transform-origin:0 0;">05.05.2020</span>
<span style="left:762.30px;top:1023.86px;font-size:16px;font-weight:bold;color:#000;transform:scaleX(1.1650);transform-origin:0 0;">(офіс)</span>
<span style="left:913.60px;top:1023.86px;font-size:16px;font-weight:bold;color:#000;transform:scaleX(1.1617);transform-origin:0 0;">Апт N<i style="font-style:normal;letter-spacing:0.4px">º</i>003 пг<i style="font-style:normal;letter-spacing:-0.9px">..</i>.</span>
<span style="left:1406.89px;top:1023.86px;font-size:16px;font-weight:bold;color:#000;transform:scaleX(1.1650);transform-origin:0 0;">115 554,6100</span>
<span style="left:1528.30px;top:1023.86px;font-size:16px;font-weight:normal;color:#000;letter-spacing:0.600px;">GIFT</span>
<span style="left:1584.30px;top:1023.86px;font-size:16px;font-weight:bold;color:#000;transform:scaleX(1.1650);transform-origin:0 0;">05.05.2020</span>
<span style="left:1706.13px;top:1023.86px;font-size:16px;font-weight:bold;color:#000;transform:scaleX(1.1650);transform-origin:0 0;">17:46:01</span>
<span style="left:1836.30px;top:1023.86px;font-size:16px;font-weight:bold;color:#000;transform:scaleX(1.1515);transform-origin:0 0;">XLS to EXP</span>
<span style="left:23.70px;top:1052.36px;font-size:16px;font-weight:bold;color:#000;transform:scaleX(0.9317);transform-origin:0 0;">2<i style="font-style:normal;letter-spacing:-0.9px">..</i>.</span>
<span style="left:81.63px;top:1052.36px;font-size:16px;font-weight:bold;color:#000;transform:scaleX(1.1650);transform-origin:0 0;">Нет</span>
<span style="left:164.44px;top:1052.36px;font-size:16px;font-weight:bold;color:#000;transform:scaleX(1.1650);transform-origin:0 0;">1</span>
<span style="left:329.78px;top:1052.36px;font-size:16px;font-weight:bold;color:#000;transform:scaleX(1.1650);transform-origin:0 0;">101</span>
<span style="left:369.30px;top:1052.36px;font-size:16px;font-weight:bold;color:#000;transform:scaleX(1.1650);transform-origin:0 0;">05.05.2020</span>
<span style="left:504.60px;top:1052.36px;font-size:16px;font-weight:bold;color:#000;transform:scaleX(1.1650);transform-origin:0 0;">05.05.2020</span>
<span style="left:652.80px;top:1052.36px;font-size:16px;font-weight:bold;color:#000;transform:scaleX(1.1650);transform-origin:0 0;">05.05.2020</span>
<span style="left:762.30px;top:1052.36px;font-size:16px;font-weight:bold;color:#000;transform:scaleX(1.1650);transform-origin:0 0;">(офіс)</span>
<span style="left:913.60px;top:1052.36px;font-size:16px;font-weight:bold;color:#000;transform:scaleX(1.1617);transform-origin:0 0;">Апт N<i style="font-style:normal;letter-spacing:0.4px">º</i>003 пг<i style="font-style:normal;letter-spacing:-0.9px">..</i>.</span>
<span style="left:1405.86px;top:1052.36px;font-size:16px;font-weight:bold;color:#000;transform:scaleX(1.1650);transform-origin:0 0;">875 977,5400</span>
<span style="left:1528.30px;top:1052.36px;font-size:16px;font-weight:normal;color:#000;letter-spacing:0.600px;">GIFT</span>
<span style="left:1584.30px;top:1052.36px;font-size:16px;font-weight:bold;color:#000;transform:scaleX(1.1650);transform-origin:0 0;">05.05.2020</span>
<span style="left:1706.13px;top:1052.36px;font-size:16px;font-weight:bold;color:#000;transform:scaleX(1.1650);transform-origin:0 0;">17:47:43</span>
<span style="left:1836.30px;top:1052.36px;font-size:16px;font-weight:bold;color:#000;transform:scaleX(1.1515);transform-origin:0 0;">XLS to EXP</span>
<span style="left:23.70px;top:1080.86px;font-size:16px;font-weight:bold;color:#000;transform:scaleX(0.9317);transform-origin:0 0;">3<i style="font-style:normal;letter-spacing:-0.9px">..</i>.</span>
<span style="left:81.63px;top:1080.86px;font-size:16px;font-weight:bold;color:#000;transform:scaleX(1.1650);transform-origin:0 0;">Нет</span>
<span style="left:165.60px;top:1080.86px;font-size:16px;font-weight:bold;color:#000;transform:scaleX(1.1650);transform-origin:0 0;">261<i style="font-style:normal;letter-spacing:-0.9px">..</i>.</span>
<span style="left:369.30px;top:1080.86px;font-size:16px;font-weight:bold;color:#000;transform:scaleX(1.1650);transform-origin:0 0;">05.05.2020</span>
<span style="left:503.44px;top:1080.86px;font-size:16px;font-weight:bold;color:#000;transform:scaleX(1.1650);transform-origin:0 0;">10.05.2020</span>
<span style="left:652.80px;top:1080.86px;font-size:16px;font-weight:bold;color:#000;transform:scaleX(1.1650);transform-origin:0 0;">09.06.2020</span>
<span style="left:762.30px;top:1080.86px;font-size:16px;font-weight:bold;color:#000;transform:scaleX(1.0892);transform-origin:0 0;">Оптима фарм, <i style="font-style:normal;letter-spacing:-0.9px">..</i>.</span>
<span style="left:913.60px;top:1080.86px;font-size:16px;font-weight:bold;color:#000;transform:scaleX(1.1617);transform-origin:0 0;">Апт N<i style="font-style:normal;letter-spacing:0.4px">º</i>003 пг<i style="font-style:normal;letter-spacing:-0.9px">..</i>.</span>
<span style="left:1050.30px;top:1080.86px;font-size:16px;font-weight:bold;color:#000;transform:scaleX(1.1650);transform-origin:0 0;">Апт N<i style="font-style:normal;letter-spacing:0.4px">º</i>003 пгт.Бар<i style="font-style:normal;letter-spacing:-0.9px">..</i>.</span>
<span style="left:1452.50px;top:1080.86px;font-size:16px;font-weight:bold;color:#000;transform:scaleX(1.1650);transform-origin:0 0;">40,7400</span>
<span style="left:1583.13px;top:1080.86px;font-size:16px;font-weight:bold;color:#000;transform:scaleX(1.1650);transform-origin:0 0;">12.05.2020</span>
<span style="left:1707.30px;top:1080.86px;font-size:16px;font-weight:bold;color:#000;transform:scaleX(1.1650);transform-origin:0 0;">20:27:42</span>
<span style="left:1835.22px;top:1080.86px;font-size:16px;font-weight:bold;color:#000;transform:scaleX(1.0832);transform-origin:0 0;">вул. Ленін<i style="font-style:normal;letter-spacing:-0.9px">..</i>.</span>
<span style="left:23.70px;top:1109.36px;font-size:16px;font-weight:bold;color:#000;transform:scaleX(0.9317);transform-origin:0 0;">3<i style="font-style:normal;letter-spacing:-0.9px">..</i>.</span>
<span style="left:81.63px;top:1109.36px;font-size:16px;font-weight:bold;color:#000;transform:scaleX(1.1650);transform-origin:0 0;">Нет</span>
<span style="left:165.60px;top:1109.36px;font-size:16px;font-weight:bold;color:#000;transform:scaleX(1.1650);transform-origin:0 0;">261<i style="font-style:normal;letter-spacing:-0.9px">..</i>.</span>
<span style="left:369.30px;top:1109.36px;font-size:16px;font-weight:bold;color:#000;transform:scaleX(1.1650);transform-origin:0 0;">05.05.2020</span>
<span style="left:503.44px;top:1109.36px;font-size:16px;font-weight:bold;color:#000;transform:scaleX(1.1650);transform-origin:0 0;">10.05.2020</span>
<span style="left:652.80px;top:1109.36px;font-size:16px;font-weight:bold;color:#000;transform:scaleX(1.1650);transform-origin:0 0;">09.06.2020</span>
<span style="left:762.30px;top:1109.36px;font-size:16px;font-weight:bold;color:#000;transform:scaleX(1.0892);transform-origin:0 0;">Оптима фарм, <i style="font-style:normal;letter-spacing:-0.9px">..</i>.</span>
<span style="left:913.60px;top:1109.36px;font-size:16px;font-weight:bold;color:#000;transform:scaleX(1.1617);transform-origin:0 0;">Апт N<i style="font-style:normal;letter-spacing:0.4px">º</i>003 пг<i style="font-style:normal;letter-spacing:-0.9px">..</i>.</span>
<span style="left:1050.30px;top:1109.36px;font-size:16px;font-weight:bold;color:#000;transform:scaleX(1.1650);transform-origin:0 0;">Апт N<i style="font-style:normal;letter-spacing:0.4px">º</i>003 пгт.Бар<i style="font-style:normal;letter-spacing:-0.9px">..</i>.</span>
<span style="left:1426.59px;top:1109.36px;font-size:16px;font-weight:bold;color:#000;transform:scaleX(1.1650);transform-origin:0 0;">2 305,8400</span>
<span style="left:1583.13px;top:1109.36px;font-size:16px;font-weight:bold;color:#000;transform:scaleX(1.1650);transform-origin:0 0;">12.05.2020</span>
<span style="left:1707.30px;top:1109.36px;font-size:16px;font-weight:bold;color:#000;transform:scaleX(1.1650);transform-origin:0 0;">20:27:31</span>
<span style="left:1835.22px;top:1109.36px;font-size:16px;font-weight:bold;color:#000;transform:scaleX(1.0832);transform-origin:0 0;">вул. Ленін<i style="font-style:normal;letter-spacing:-0.9px">..</i>.</span>
<span style="left:23.70px;top:1137.86px;font-size:16px;font-weight:bold;color:#000;transform:scaleX(0.9317);transform-origin:0 0;">3<i style="font-style:normal;letter-spacing:-0.9px">..</i>.</span>
<span style="left:81.63px;top:1137.86px;font-size:16px;font-weight:bold;color:#000;transform:scaleX(1.1650);transform-origin:0 0;">Нет</span>
<span style="left:165.60px;top:1137.86px;font-size:16px;font-weight:bold;color:#000;transform:scaleX(1.0986);transform-origin:0 0;">YZ7<i style="font-style:normal;letter-spacing:-0.9px">..</i>.</span>
<span style="left:369.30px;top:1137.86px;font-size:16px;font-weight:bold;color:#000;transform:scaleX(1.1650);transform-origin:0 0;">05.05.2020</span>
<span style="left:503.44px;top:1137.86px;font-size:16px;font-weight:bold;color:#000;transform:scaleX(1.1650);transform-origin:0 0;">10.05.2020</span>
<span style="left:651.63px;top:1137.86px;font-size:16px;font-weight:bold;color:#000;transform:scaleX(1.1650);transform-origin:0 0;">14.06.2020</span>
<span style="left:761.13px;top:1137.86px;font-size:16px;font-weight:bold;color:#000;transform:scaleX(1.1650);transform-origin:0 0;">БаДМ ТОВ</span>
<span style="left:913.60px;top:1137.86px;font-size:16px;font-weight:bold;color:#000;transform:scaleX(1.1617);transform-origin:0 0;">Апт N<i style="font-style:normal;letter-spacing:0.4px">º</i>003 пг<i style="font-style:normal;letter-spacing:-0.9px">..</i>.</span>
<span style="left:1050.30px;top:1137.86px;font-size:16px;font-weight:bold;color:#000;transform:scaleX(1.1650);transform-origin:0 0;">Апт N<i style="font-style:normal;letter-spacing:0.4px">º</i>003 пгт.Бар<i style="font-style:normal;letter-spacing:-0.9px">..</i>.</span>
<span style="left:1442.14px;top:1137.86px;font-size:16px;font-weight:bold;color:#000;transform:scaleX(1.1650);transform-origin:0 0;">326,7900</span>
<span style="left:1583.13px;top:1137.86px;font-size:16px;font-weight:bold;color:#000;transform:scaleX(1.1650);transform-origin:0 0;">12.05.2020</span>
<span style="left:1707.30px;top:1137.86px;font-size:16px;font-weight:bold;color:#000;transform:scaleX(1.1650);transform-origin:0 0;">20:27:23</span>
<span style="left:1836.30px;top:1137.86px;font-size:16px;font-weight:bold;color:#000;transform:scaleX(1.0984);transform-origin:0 0;">А N<i style="font-style:normal;letter-spacing:0.4px">º</i>3, смт<i style="font-style:normal;letter-spacing:-0.9px">..</i>.</span>
<span style="left:22.72px;top:1166.36px;font-size:16px;font-weight:bold;color:#000;transform:scaleX(0.9765);transform-origin:0 0;">1<i style="font-style:normal;letter-spacing:-0.9px">..</i>.</span>
<span style="left:81.63px;top:1166.36px;font-size:16px;font-weight:bold;color:#000;transform:scaleX(1.1650);transform-origin:0 0;">Нет</span>
<span style="left:165.60px;top:1166.36px;font-size:16px;font-weight:bold;color:#000;transform:scaleX(1.1650);transform-origin:0 0;">56</span>
<span style="left:329.78px;top:1166.36px;font-size:16px;font-weight:bold;color:#000;transform:scaleX(1.1650);transform-origin:0 0;">104</span>
<span style="left:369.30px;top:1166.36px;font-size:16px;font-weight:bold;color:#000;transform:scaleX(1.1650);transform-origin:0 0;">05.05.2020</span>
<span style="left:504.60px;top:1166.36px;font-size:16px;font-weight:bold;color:#000;transform:scaleX(1.1650);transform-origin:0 0;">05.05.2020</span>
<span style="left:652.80px;top:1166.36px;font-size:16px;font-weight:bold;color:#000;transform:scaleX(1.1650);transform-origin:0 0;">05.05.2020</span>
<span style="left:762.30px;top:1166.36px;font-size:16px;font-weight:bold;color:#000;transform:scaleX(1.1650);transform-origin:0 0;">(офіс)</span>
<span style="left:913.60px;top:1166.36px;font-size:16px;font-weight:bold;color:#000;transform:scaleX(1.1617);transform-origin:0 0;">Апт N<i style="font-style:normal;letter-spacing:0.4px">º</i>003 пг<i style="font-style:normal;letter-spacing:-0.9px">..</i>.</span>
<span style="left:1452.50px;top:1166.36px;font-size:16px;font-weight:bold;color:#000;transform:scaleX(1.1650);transform-origin:0 0;">21,2700</span>
<span style="left:1528.30px;top:1166.36px;font-size:16px;font-weight:bold;color:#000;transform:scaleX(1.1650);transform-origin:0 0;">AD<i style="font-style:normal;letter-spacing:-0.9px">..</i>.</span>
<span style="left:1584.30px;top:1166.36px;font-size:16px;font-weight:bold;color:#000;transform:scaleX(1.1650);transform-origin:0 0;">25.06.2020</span>
<span style="left:1706.13px;top:1166.36px;font-size:16px;font-weight:bold;color:#000;transform:scaleX(1.1650);transform-origin:0 0;">12:25:37</span>
<span style="left:23.70px;top:1194.86px;font-size:16px;font-weight:bold;color:#000;transform:scaleX(0.9317);transform-origin:0 0;">5<i style="font-style:normal;letter-spacing:-0.9px">..</i>.</span>
<span style="left:81.63px;top:1194.86px;font-size:16px;font-weight:bold;color:#000;transform:scaleX(1.1650);transform-origin:0 0;">Нет</span>
<span style="left:165.60px;top:1194.86px;font-size:16px;font-weight:bold;color:#000;transform:scaleX(1.1650);transform-origin:0 0;">426<i style="font-style:normal;letter-spacing:-0.9px">..</i>.</span>
<span style="left:369.30px;top:1194.86px;font-size:16px;font-weight:bold;color:#000;transform:scaleX(1.1650);transform-origin:0 0;">05.05.2020</span>
<span style="left:503.44px;top:1194.86px;font-size:16px;font-weight:bold;color:#000;transform:scaleX(1.1650);transform-origin:0 0;">14.05.2020</span>
<span style="left:652.80px;top:1194.86px;font-size:16px;font-weight:bold;color:#000;transform:scaleX(1.1650);transform-origin:0 0;">09.06.2020</span>
<span style="left:761.13px;top:1194.86px;font-size:16px;font-weight:bold;color:#000;transform:scaleX(1.1650);transform-origin:0 0;">ВЕНТА ООО</span>
<span style="left:913.60px;top:1194.86px;font-size:16px;font-weight:bold;color:#000;transform:scaleX(1.1617);transform-origin:0 0;">Апт N<i style="font-style:normal;letter-spacing:0.4px">º</i>003 пг<i style="font-style:normal;letter-spacing:-0.9px">..</i>.</span>
<span style="left:1050.30px;top:1194.86px;font-size:16px;font-weight:bold;color:#000;transform:scaleX(1.1650);transform-origin:0 0;">Апт N<i style="font-style:normal;letter-spacing:0.4px">º</i>003 пгт.Бар<i style="font-style:normal;letter-spacing:-0.9px">..</i>.</span>
<span style="left:1426.59px;top:1194.86px;font-size:16px;font-weight:bold;color:#000;transform:scaleX(1.1650);transform-origin:0 0;">1 334,5100</span>
<span style="left:1583.13px;top:1194.86px;font-size:16px;font-weight:bold;color:#000;transform:scaleX(1.1650);transform-origin:0 0;">18.05.2020</span>
<span style="left:1706.13px;top:1194.86px;font-size:16px;font-weight:bold;color:#000;transform:scaleX(1.1650);transform-origin:0 0;">13:31:06</span>
<span style="left:1836.30px;top:1194.86px;font-size:16px;font-weight:bold;color:#000;transform:scaleX(1.1650);transform-origin:0 0;">Аптека <i style="font-style:normal;letter-spacing:-0.9px">..</i>.</span>
<span style="left:23.70px;top:1223.36px;font-size:16px;font-weight:bold;color:#000;transform:scaleX(0.9317);transform-origin:0 0;">5<i style="font-style:normal;letter-spacing:-0.9px">..</i>.</span>
<span style="left:81.63px;top:1223.36px;font-size:16px;font-weight:bold;color:#000;transform:scaleX(1.1650);transform-origin:0 0;">Нет</span>
<span style="left:165.60px;top:1223.36px;font-size:16px;font-weight:bold;color:#000;transform:scaleX(1.1650);transform-origin:0 0;">96</span>
<span style="left:369.30px;top:1223.36px;font-size:16px;font-weight:bold;color:#000;transform:scaleX(1.1650);transform-origin:0 0;">05.05.2020</span>
<span style="left:503.44px;top:1223.36px;font-size:16px;font-weight:bold;color:#000;transform:scaleX(1.1650);transform-origin:0 0;">13.05.2020</span>
<span style="left:652.80px;top:1223.36px;font-size:16px;font-weight:bold;color:#000;transform:scaleX(1.1650);transform-origin:0 0;">03.08.2020</span>
<span style="left:761.20px;top:1223.36px;font-size:16px;font-weight:bold;color:#000;transform:scaleX(1.1019);transform-origin:0 0;">Юнифарма ООО</span>
<span style="left:913.60px;top:1223.36px;font-size:16px;font-weight:bold;color:#000;transform:scaleX(1.1617);transform-origin:0 0;">Апт N<i style="font-style:normal;letter-spacing:0.4px">º</i>003 пг<i style="font-style:normal;letter-spacing:-0.9px">..</i>.</span>
<span style="left:1050.30px;top:1223.36px;font-size:16px;font-weight:bold;color:#000;transform:scaleX(1.1650);transform-origin:0 0;">Апт N<i style="font-style:normal;letter-spacing:0.4px">º</i>003 пгт.Бар<i style="font-style:normal;letter-spacing:-0.9px">..</i>.</span>
<span style="left:1442.14px;top:1223.36px;font-size:16px;font-weight:bold;color:#000;transform:scaleX(1.1650);transform-origin:0 0;">943,1400</span>
<span style="left:1583.13px;top:1223.36px;font-size:16px;font-weight:bold;color:#000;transform:scaleX(1.1650);transform-origin:0 0;">18.05.2020</span>
<span style="left:1706.13px;top:1223.36px;font-size:16px;font-weight:bold;color:#000;transform:scaleX(1.1650);transform-origin:0 0;">13:29:00</span>
<div style="left:0px;top:1248px;width:2134px;height:32px;background:#f0f0f0;"></div>
<div style="left:16px;top:1248px;width:2px;height:32px;background:#d8d8d8;"></div>
<div style="left:0px;top:1279px;width:2134px;height:2px;background:#c8c8c8;"></div>
<div style="left:164px;top:1250px;width:52px;height:27px;background:#e6e8ea;box-sizing:border-box;border:1px solid #dadcde;"></div>
<div style="left:164px;top:1250px;width:51px;height:27px;overflow:hidden">
<span style="left:3.5px;top:6.46px;font-size:16px;font-weight:bold;letter-spacing:1.1px">Запис</span>
</div>
<div style="left:1384px;top:1250px;width:140px;height:27px;background:#e6e8ea;box-sizing:border-box;border:1px solid #dadcde;"></div>
<span style="left:1420.40px;top:1256.46px;font-size:16px;font-weight:bold;color:#000;transform:scaleX(1.1650);transform-origin:0 0;">7813522,84</span>
<div style="left:2134px;top:193px;width:25px;height:1087px;background:#f0f0f0;"></div>
<div style="left:2135px;top:193px;width:1px;height:1087px;background:#f8f8f8;"></div>
<div style="left:2136px;top:219px;width:22px;height:24px;background:#cdcdcd;"></div>
<svg style="left:2140px;top:201px" width="14" height="10" viewBox="0 0 14 10"><path d="M1.5 8 L7 2.5 L12.5 8" fill="none" stroke="#606060" stroke-width="2.8"/></svg>
<svg style="left:2140px;top:1263px" width="14" height="10" viewBox="0 0 14 10"><path d="M1.5 2 L7 7.5 L12.5 2" fill="none" stroke="#606060" stroke-width="2.8"/></svg>
<div style="left:26px;top:1283px;width:935px;height:22px;background:#cdcdcd;"></div>
<svg style="left:6px;top:1287px" width="10" height="14" viewBox="0 0 10 14"><path d="M8 1.5 L2.5 7 L8 12.5" fill="none" stroke="#606060" stroke-width="2.8"/></svg>
<svg style="left:2117px;top:1287px" width="10" height="14" viewBox="0 0 10 14"><path d="M2 1.5 L7.5 7 L2 12.5" fill="none" stroke="#606060" stroke-width="2.8"/></svg>
<div style="left:5px;top:1310px;width:187px;height:34px;background:#f0f0f0;box-sizing:border-box;border:2px solid #1a1a1a;"></div>
<span style="left:8.50px;top:1318.53px;font-size:16.5px;font-weight:normal;color:#1a1a2a;letter-spacing:-0.252px;">Головна</span>
<div style="left:195px;top:1310px;width:188px;height:34px;background:#fdd1a9;box-sizing:border-box;border:2px solid #2d8ae0;"></div>
<span style="left:198.50px;top:1318.53px;font-size:16.5px;font-weight:normal;color:#1a1a2a;letter-spacing:-0.033px;">Контроль за прихідом</span>
<div style="left:0px;top:1347px;width:2159px;height:1px;background:#dcdcdc;"></div>
<div style="left:0px;top:1375px;width:2159px;height:1px;background:#606060;"></div>
<div style="left:0px;top:1376px;width:2159px;height:1px;background:#0a0a0a;"></div>
<div style="left:297px;top:1350px;width:1px;height:25px;background:#d8d8d8;"></div>
<div style="left:603px;top:1350px;width:1px;height:25px;background:#d8d8d8;"></div>
<div style="left:661px;top:1350px;width:1px;height:25px;background:#d8d8d8;"></div>
<div style="left:1118px;top:1350px;width:1px;height:25px;background:#d8d8d8;"></div>
<svg style="left:4px;top:1352px" width="20" height="23" viewBox="0 0 20 23"><defs><linearGradient id="dbg" x1="0" x2="1"><stop offset="0" stop-color="#b9b6e6"/><stop offset="0.6" stop-color="#8f8bc8"/><stop offset="1" stop-color="#6c66a8"/></linearGradient><linearGradient id="dbb" x1="0" x2="1"><stop offset="0" stop-color="#5aa6e8"/><stop offset="1" stop-color="#1a7fd8"/></linearGradient></defs><path d="M1.5 3.5 Q1.5 1.5 5 1.5 H18 Q19.5 1.5 19.5 4 V17.5 Q19.5 20 17 20.5 L9 22 Q4 22.5 2 19.5 Z" fill="url(#dbg)"/><rect x="1.5" y="5.2" width="18" height="2.4" fill="#e8e4f8" opacity="0.7"/><rect x="1.5" y="8" width="18" height="10" fill="url(#dbb)"/><g stroke="#d9c6e8" stroke-width="0.7" opacity="0.8"><path d="M7 11 H19 M7 14.3 H19"/></g><g fill="#e6f0ff"><rect x="2.5" y="9.3" width="1.6" height="1.6"/><rect x="2.5" y="12.6" width="1.6" height="1.6"/><rect x="2.5" y="15.8" width="1.6" height="1.6"/></g></svg>
<span style="left:29.83px;top:1353.32px;font-size:19px;font-weight:normal;color:#111;transform:scaleX(0.8708);transform-origin:0 0;">База даних: TASA3@TITAN</span>
<svg style="left:303px;top:1352px" width="18" height="23" viewBox="0 0 18 23"><defs><radialGradient id="ub" cx="0.5" cy="0.35" r="0.7"><stop offset="0" stop-color="#eceaff"/><stop offset="1" stop-color="#7a78d0"/></radialGradient><linearGradient id="uh" x1="0" y1="0" x2="1" y2="1"><stop offset="0" stop-color="#dde6ff"/><stop offset="1" stop-color="#6f74c8"/></linearGradient></defs><path d="M2 10 A6.5 6.5 0 0 1 13 3.5 L10 7 Z" fill="#e8321a"/><path d="M1 21.5 Q1 14.5 6 13.5 L9 16 L12 13.5 Q17 14.5 17 21.5 Z" fill="url(#ub)"/><ellipse cx="9.5" cy="9" rx="5.2" ry="5.8" fill="url(#uh)"/><path d="M6 13.5 Q9.5 10.5 13 13.5 L9.5 16.5 Z" fill="#eba05a"/></svg>
<span style="left:328.15px;top:1353.32px;font-size:19px;font-weight:normal;color:#111;transform:scaleX(0.8481);transform-origin:0 0;">Користувач: GIFT</span>
<svg style="left:606px;top:1351px" width="22" height="24" viewBox="0 0 22 24"><defs><linearGradient id="cr" x1="0" y1="0" x2="1" y2="1"><stop offset="0" stop-color="#d6d6f4"/><stop offset="1" stop-color="#6a6cb8"/></linearGradient></defs><path d="M2 8 Q4 4 9 3.5 H14 L19 8 V19.5 H2 Z" fill="url(#cr)"/><path d="M13 1.5 L18 8" stroke="#555" stroke-width="1.2"/><path d="M5 8 L2.5 15 L4.5 15 L3 22" stroke="#f0d030" stroke-width="2.4" fill="none"/><path d="M13.5 12 L11 18 L13 18 L11.5 23" stroke="#f0c030" stroke-width="2.4" fill="none"/></svg>
<span style="left:634.50px;top:1353.32px;font-size:19px;font-weight:normal;color:#111;">3</span>
<span style="left:665.13px;top:1353.32px;font-size:19px;font-weight:normal;color:#111;transform:scaleX(0.8743);transform-origin:0 0;">Кассовый аппарат не подключен</span>
<span style="left:1123.00px;top:1353.32px;font-size:19px;font-weight:normal;color:#111;transform:scaleX(0.8597);transform-origin:0 0;">Зона: Склад [1]</span>
<svg style="left:0;top:0" width="2159" height="1377" viewBox="0 0 2159 1377"><polygon points="455.6,181.0 440.8,189.9 442.2,192.2 446.2,191.2 248.3,538.0 248.7,538.3 452.2,193.2 452.6,197.9 455.6,198.2" fill="#f00" stroke="#f00" stroke-width="1.6" stroke-linejoin="round"/></svg>
</body></html>
